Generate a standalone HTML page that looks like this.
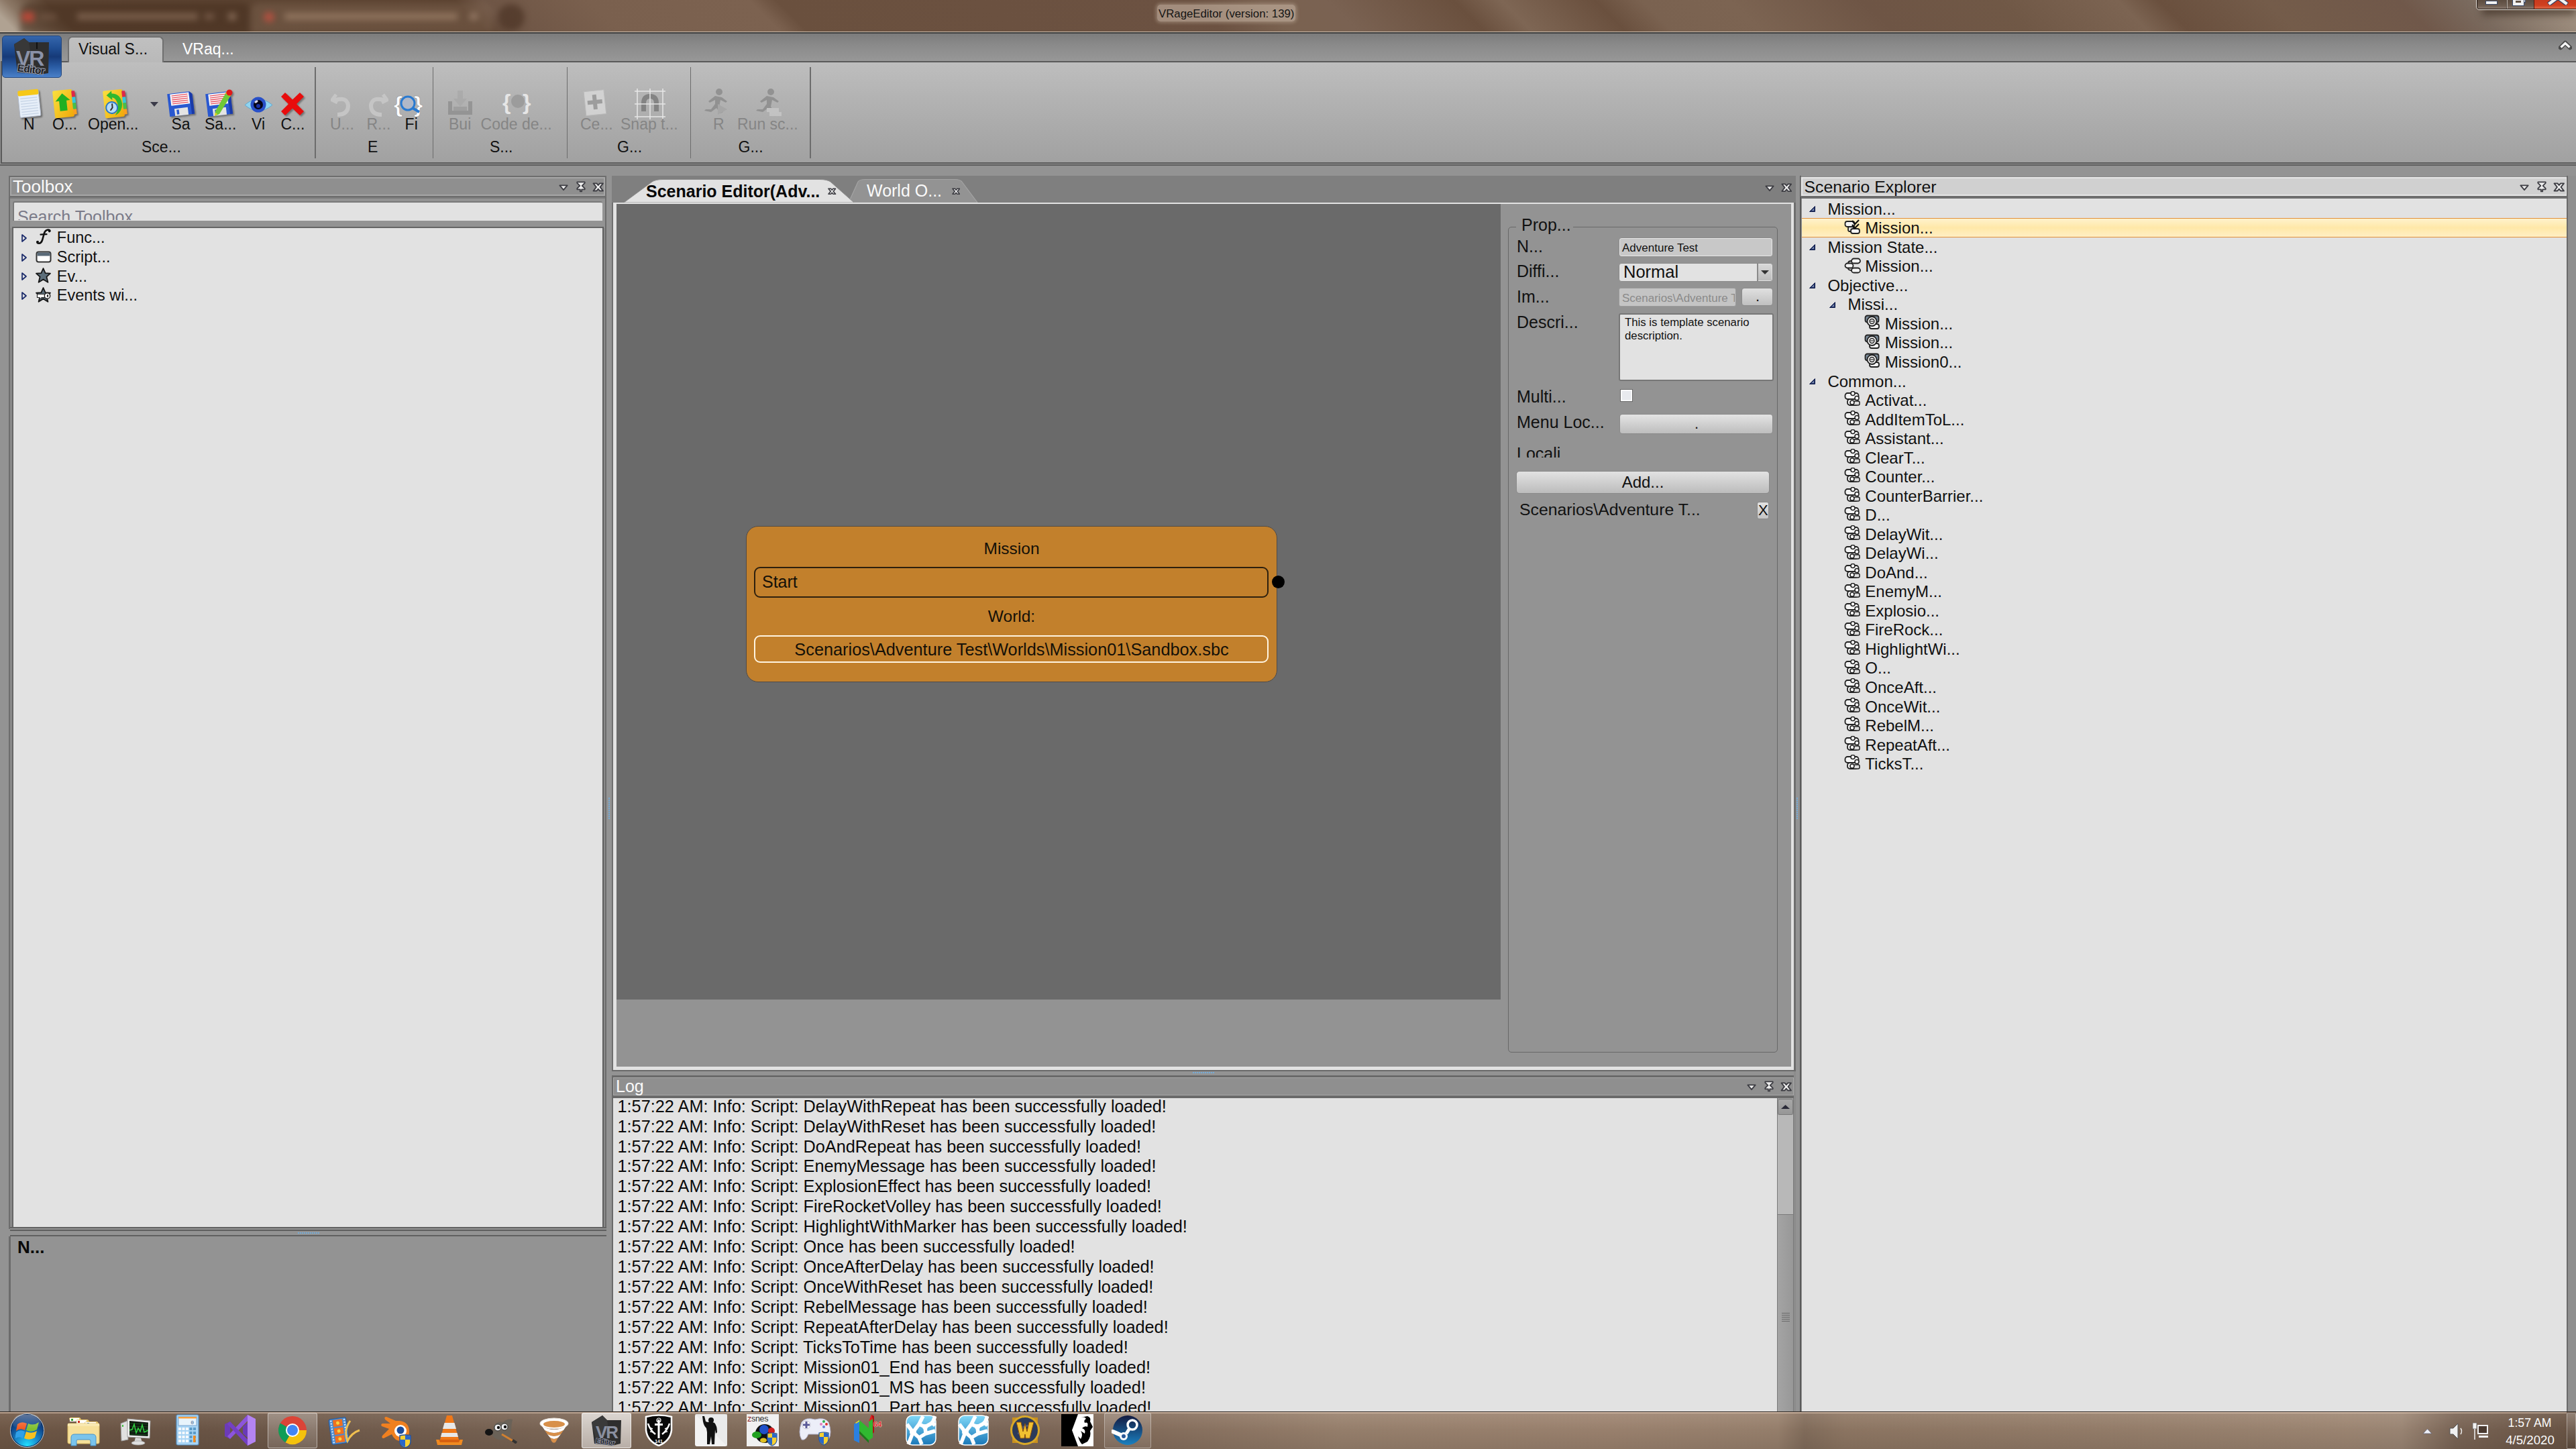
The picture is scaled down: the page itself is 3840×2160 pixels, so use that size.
<!DOCTYPE html>
<html><head><meta charset="utf-8">
<style>
*{margin:0;padding:0;box-sizing:border-box}
html,body{width:3840px;height:2160px;overflow:hidden;background:#939393;font-family:"Liberation Sans",sans-serif;position:relative}
.a{position:absolute}
.t{position:absolute;white-space:nowrap;line-height:1}
svg{position:absolute}
</style></head><body>
<div class="a" style="left:0px;top:0px;width:3840px;height:47px;background:linear-gradient(45deg,#b0a292 17px,#8c7866 38px,#5e4634 80px,#5a412f 512px,#6e5545 540px,#7a604e 653px,#7c6250 823px,#6a503e 851px,#6c5242 1289px,#7a6250 1360px,#7a6252 1431px,#6a503e 1565px,#7e6654 1615px,#6a503e 1714px,#7a6250 1763px,#7c6452 1855px,#6e5545 1996px,#705846 2138px,#7c6452 2265px,#6a503e 2308px,#745c4a 2421px,#70584a 2562px,#7a6a5e 2633px,#a09080 2732px)"></div>
<div class="a" style="left:0;top:0;width:1200px;height:47px;filter:blur(5px);overflow:visible"><div class="a" style="left:30px;top:4px;width:345px;height:46px;background:rgba(70,45,30,0.55);border-radius:16px 16px 0 0"></div><div class="a" style="left:372px;top:4px;width:362px;height:46px;background:rgba(135,110,90,0.35);border-radius:16px 16px 0 0"></div><div class="a" style="left:33px;top:18px;width:18px;height:14px;background:#b84838;border-radius:4px"></div><div class="a" style="left:60px;top:21px;width:24px;height:8px;background:rgba(130,100,80,0.5)"></div><div class="a" style="left:115px;top:19px;width:180px;height:11px;background:rgba(150,120,100,0.55)"></div><div class="a" style="left:305px;top:20px;width:14px;height:9px;background:rgba(150,120,100,0.5)"></div><div class="a" style="left:340px;top:19px;width:12px;height:11px;background:rgba(160,130,110,0.6)"></div><div class="a" style="left:393px;top:18px;width:16px;height:15px;background:#b05040;border-radius:8px"></div><div class="a" style="left:424px;top:19px;width:258px;height:11px;background:rgba(165,135,112,0.6)"></div><div class="a" style="left:700px;top:19px;width:12px;height:11px;background:rgba(170,140,120,0.6)"></div><div class="a" style="left:742px;top:6px;width:40px;height:40px;border-radius:20px;background:rgba(65,42,28,0.55)"></div></div>
<div class="t" style="left:1725px;top:7px;height:25px;padding:6px 2px 0 2px;font-size:16.8px;color:#141414;background:rgba(200,182,165,0.6);border-radius:5px;box-shadow:0 0 5px 2px rgba(200,182,165,0.45)">VRageEditor (version: 139)</div>
<div class="a" style="left:3700px;top:8px;width:140px;height:14px;filter:blur(6px);background:rgba(40,25,15,0.55)"></div>
<div class="a" style="left:3691px;top:-2px;width:152px;height:17px;border:1px solid #f0e8e0;border-radius:0 0 0 5px;overflow:hidden"><div class="a" style="left:0;top:0;width:150px;height:15px;border:1px solid #1e1612;border-top:none;border-radius:0 0 0 4px;overflow:hidden;background:linear-gradient(#5a4a3e,#6e5e52 70%,#8a7a70)"><div class="a" style="left:43px;top:0;width:2px;height:15px;background:linear-gradient(90deg,#2a2018,#e8e0d8)"></div><div class="a" style="left:84px;top:0;width:66px;height:15px;background:linear-gradient(#c83a1e,#d04020 60%,#e07050);border-left:1px solid #5a1a10"></div></div></div>
<div class="a" style="left:3705px;top:1px;width:18px;height:6px;background:#f2f2f2;border:1px solid #3a4a6a"></div>
<div class="a" style="left:3746px;top:-3px;width:16px;height:11px;border:4px solid #f2f2f2;box-shadow:0 0 0 1px #3a4a6a"></div>
<div class="a" style="left:3762px;top:-2px;width:3px;height:6px;background:#f2f2f2;border:1px solid #3a4a6a"></div>
<svg class="a" style="left:3796px;top:-8px;" width="34" height="16" viewBox="0 0 34 16"><path d="M3 14.5 L17 4 L31 14.5 M3 -6 L17 4 L31 -6" fill="none" stroke="#3a4060" stroke-width="7" stroke-linejoin="round"/><path d="M3.5 14 L17 4 L30.5 14 M3.5 -5.5 L17 4 L30.5 -5.5" fill="none" stroke="#f2f2f2" stroke-width="4.5"/></svg>
<div class="a" style="left:0px;top:47px;width:3840px;height:1px;background:#cdbdac"></div>
<div class="a" style="left:0px;top:48px;width:3840px;height:2px;background:#3e3e3e"></div>
<div class="a" style="left:0px;top:50px;width:3840px;height:42px;background:linear-gradient(#7c7c7c,#8a8a8a 40%,#989898)"></div>
<div class="a" style="left:1px;top:91px;width:3839px;height:153px;border:2px solid #5a5a5a;border-right:none;background:linear-gradient(#bebebe,#b3b3b3 35%,#a1a1a1)"></div>
<div class="a" style="left:0px;top:244px;width:3840px;height:1px;background:#9c9c9c"></div>
<div class="a" style="left:0px;top:245px;width:3840px;height:2px;background:#5c5c5c"></div>
<div class="a" style="left:101px;top:54px;width:143px;height:39px;border:2px solid #707070;border-bottom:none;border-radius:7px 7px 0 0;background:linear-gradient(#c0c0c0,#b9b9b9)"></div>
<div class="t" style="left:117px;top:62.0px;font-size:23px;color:#111;font-weight:normal;">Visual S...</div>
<div class="t" style="left:272px;top:62.0px;font-size:23px;color:#fff;font-weight:normal;">VRaq...</div>
<div class="a" style="left:3px;top:53px;width:89px;height:63px;border-radius:5px;border:1px solid #23477e;background:linear-gradient(#3566ac 0,#1f4d92 30%,#163a78 50%,#2a5ca4 75%,#4a80c8 100%)"></div>
<svg class="a" style="left:20px;top:56px;" width="56" height="58" viewBox="0 0 56 58"><path d="M1 10 L16 1 L23 7 L53 7 L52 53 L40 55 L6 52 Z" fill="#2e2e2e"/><path d="M1 10 L16 1 L23 7 L27 33 L8 40Z" fill="#383838"/><line x1="35" y1="7" x2="35" y2="17" stroke="#111" stroke-width="2"/><text x="4" y="42" font-family="Liberation Sans" font-weight="bold" font-size="32" fill="#8a92a8" letter-spacing="-2">VR</text><text x="6" y="53" font-family="Liberation Sans" font-weight="bold" font-size="15" fill="#1c1c1c" stroke="#9aa0b4" stroke-width="2" paint-order="stroke" transform="rotate(7 30 48)" letter-spacing="-0.5">Editor</text></svg>
<svg class="a" style="left:3814px;top:59px;" width="20" height="16" viewBox="0 0 20 16"><path d="M3 12 L10 5 L17 12" fill="none" stroke="#4a4a4a" stroke-width="6.5" stroke-linecap="round" stroke-linejoin="round"/><path d="M3.5 11.5 L10 5.5 L16.5 11.5" fill="none" stroke="#f6f6f6" stroke-width="3.2"/></svg>
<div class="a" style="left:469px;top:99.5px;width:1.8px;height:136.5px;background:#6c6c6c"></div>
<div class="a" style="left:644.5px;top:99.5px;width:1.8px;height:136.5px;background:#6c6c6c"></div>
<div class="a" style="left:844.5px;top:99.5px;width:1.8px;height:136.5px;background:#6c6c6c"></div>
<div class="a" style="left:1028.5px;top:99.5px;width:1.8px;height:136.5px;background:#6c6c6c"></div>
<div class="a" style="left:1207px;top:99.5px;width:1.8px;height:136.5px;background:#6c6c6c"></div>
<svg class="a" style="left:23px;top:130px;filter:drop-shadow(2px 2px 1.2px rgba(0,0,0,0.4))" width="42" height="48" viewBox="0 0 42 48"><defs><linearGradient id="yg" x1="0" y1="0" x2="1" y2="1"><stop offset="0" stop-color="#fae040"/><stop offset="1" stop-color="#f0a808"/></linearGradient></defs><g transform="rotate(-6 21 24)"><rect x="5" y="5" width="31" height="39" rx="2" fill="#e6eef8" stroke="#b0b8c8" stroke-width="1"/><rect x="5" y="4" width="31" height="8" rx="2" fill="#f6c818"/><line x1="8" y1="16" x2="33" y2="16" stroke="#c4d2e4" stroke-width="1.2"/><line x1="8" y1="20" x2="33" y2="20" stroke="#c4d2e4" stroke-width="1.2"/><line x1="8" y1="24" x2="33" y2="24" stroke="#c4d2e4" stroke-width="1.2"/><line x1="8" y1="28" x2="33" y2="28" stroke="#c4d2e4" stroke-width="1.2"/><line x1="8" y1="32" x2="33" y2="32" stroke="#c4d2e4" stroke-width="1.2"/><line x1="8" y1="36" x2="33" y2="36" stroke="#c4d2e4" stroke-width="1.2"/><line x1="8" y1="40" x2="33" y2="40" stroke="#c4d2e4" stroke-width="1.2"/></g></svg>
<div class="t" style="left:35px;top:174.0px;font-size:23px;color:#111;font-weight:normal;">N</div>
<svg class="a" style="left:75px;top:130px;filter:drop-shadow(2px 2px 1.2px rgba(0,0,0,0.4))" width="42" height="48" viewBox="0 0 42 48"><g transform="rotate(-6 21 24)"><rect x="5" y="4" width="29" height="41" rx="2" fill="url(#yg)"/><rect x="33" y="7" width="5" height="9" fill="#e02848"/><rect x="33" y="16" width="5" height="9" fill="#38c8d8"/><rect x="33" y="25" width="5" height="9" fill="#48c048"/><rect x="33" y="34" width="5" height="8" fill="#f8a020"/></g><g transform="rotate(-6 21 24)"><path d="M19 9 L30 20 L24.5 20 L24.5 35 L13.5 35 L13.5 20 L8 20Z" fill="#22b022"/></g></svg>
<div class="t" style="left:78px;top:174.0px;font-size:23px;color:#111;font-weight:normal;">O...</div>
<svg class="a" style="left:150px;top:130px;filter:drop-shadow(2px 2px 1.2px rgba(0,0,0,0.4))" width="42" height="48" viewBox="0 0 42 48"><g transform="rotate(-6 21 24)"><rect x="5" y="4" width="29" height="41" rx="2" fill="url(#yg)"/><rect x="33" y="7" width="5" height="9" fill="#e02848"/><rect x="33" y="16" width="5" height="9" fill="#38c8d8"/><rect x="33" y="25" width="5" height="9" fill="#48c048"/><rect x="33" y="34" width="5" height="8" fill="#f8a020"/></g><g transform="rotate(-6 21 24)"><path d="M10 11 L18 5 L18 9 Q31 10 32 26 Q31 38 20 42 Q27 33 25 24 Q23 16 18 15 L18 19Z" fill="#30b830"/><circle cx="16" cy="30" r="8.5" fill="#b8dcf8" stroke="#2878c8" stroke-width="2"/><path d="M17 24 L17 30 L13.5 34" stroke="#333" stroke-width="2" fill="none"/></g></svg>
<div class="t" style="left:131px;top:174.0px;font-size:23px;color:#111;font-weight:normal;">Open...</div>
<svg class="a" style="left:224px;top:152px;" width="12" height="8" viewBox="0 0 12 8"><path d="M0 0 L12 0 L6 7Z" fill="#3a3a48"/></svg>
<svg class="a" style="left:247.5px;top:133px;filter:drop-shadow(2px 2px 1px rgba(0,0,0,0.35))" width="43" height="43" viewBox="0 0 43 43"><g transform="rotate(-7 21 21)"><path d="M3 5 L36 5 L40 9 L40 39 L3 39Z" fill="#2a58d0"/><path d="M36 5 L40 9 L40 39 L36 39Z" fill="#1a3aa8"/><rect x="7" y="6" width="28" height="17" fill="#fafafa"/><line x1="9" y1="8.5" x2="33" y2="8.5" stroke="#e85060" stroke-width="1.3"/><line x1="9" y1="11.5" x2="33" y2="11.5" stroke="#e85060" stroke-width="1.3"/><line x1="9" y1="14.5" x2="33" y2="14.5" stroke="#e85060" stroke-width="1.3"/><line x1="9" y1="17.5" x2="33" y2="17.5" stroke="#e85060" stroke-width="1.3"/><line x1="9" y1="20.5" x2="33" y2="20.5" stroke="#e85060" stroke-width="1.3"/><rect x="11" y="28" width="20" height="11" fill="#e4e4e4"/><rect x="14" y="30" width="3.5" height="7" fill="#2a58d0"/></g></svg>
<div class="t" style="left:255.5px;top:174.0px;font-size:23px;color:#111;font-weight:normal;">Sa</div>
<svg class="a" style="left:305px;top:133px;filter:drop-shadow(2px 2px 1px rgba(0,0,0,0.35))" width="43" height="43" viewBox="0 0 43 43"><g transform="rotate(-7 21 21)"><path d="M3 5 L36 5 L40 9 L40 39 L3 39Z" fill="#2a58d0"/><path d="M36 5 L40 9 L40 39 L36 39Z" fill="#1a3aa8"/><rect x="7" y="6" width="28" height="17" fill="#fafafa"/><line x1="9" y1="8.5" x2="33" y2="8.5" stroke="#e85060" stroke-width="1.3"/><line x1="9" y1="11.5" x2="33" y2="11.5" stroke="#e85060" stroke-width="1.3"/><line x1="9" y1="14.5" x2="33" y2="14.5" stroke="#e85060" stroke-width="1.3"/><line x1="9" y1="17.5" x2="33" y2="17.5" stroke="#e85060" stroke-width="1.3"/><line x1="9" y1="20.5" x2="33" y2="20.5" stroke="#e85060" stroke-width="1.3"/><rect x="11" y="28" width="20" height="11" fill="#e4e4e4"/><rect x="14" y="30" width="3.5" height="7" fill="#2a58d0"/></g><path d="M33 3 L40 8 L22 37 L15 40 L16 33Z" fill="#70c838"/><path d="M33 3 L40 8 L38 11 L31 6Z" fill="#f0a020"/><circle cx="37" cy="5" r="4.5" fill="#e01818"/><path d="M15 40 L16 35 L19 37Z" fill="#f0d020"/></svg>
<div class="t" style="left:305px;top:174.0px;font-size:23px;color:#111;font-weight:normal;">Sa...</div>
<svg class="a" style="left:364px;top:144px;" width="43" height="25" viewBox="0 0 43 25"><path d="M1 12.5 Q21 -5 42 12.5 Q21 30 1 12.5Z" fill="#90d4f0" stroke="#60a8d0" stroke-width="1"/><circle cx="21" cy="12" r="11.5" fill="#2850c8"/><circle cx="21" cy="12" r="7" fill="#050518"/><circle cx="21" cy="14" r="3" fill="#1a30a0"/><ellipse cx="18" cy="7.5" rx="2.8" ry="1.8" fill="#d8d8e8" transform="rotate(-30 18 7.5)"/></svg>
<div class="t" style="left:375px;top:174.0px;font-size:23px;color:#111;font-weight:normal;">Vi</div>
<svg class="a" style="left:416px;top:136px;filter:drop-shadow(2px 2px 1px rgba(0,0,0,0.35))" width="40" height="40" viewBox="0 0 40 40"><path d="M3 8 L9 2 L20 12.5 L31 2 L37 8 L26 19 L37 30 L31 36 L20 25.5 L9 36 L3 30 L14 19Z" fill="#e80c0c"/></svg>
<div class="t" style="left:418.5px;top:174.0px;font-size:23px;color:#111;font-weight:normal;">C...</div>
<div class="t" style="left:211px;top:207.5px;font-size:23px;color:#111;font-weight:normal;">Sce...</div>
<svg class="a" style="left:493px;top:135px;opacity:0.9" width="34" height="42" viewBox="0 0 34 42"><path d="M8 6 L2 14 L10 18" fill="none" stroke="#c8c8c8" stroke-width="5"/><path d="M4 15 Q24 8 26 22 Q26 36 10 36" fill="none" stroke="#c8c8c8" stroke-width="6"/></svg>
<div class="t" style="left:492px;top:174.0px;font-size:23px;color:#858585;font-weight:normal;">U...</div>
<svg class="a" style="left:545px;top:135px;opacity:0.9" width="34" height="42" viewBox="0 0 34 42"><path d="M26 6 L32 14 L24 18" fill="none" stroke="#c8c8c8" stroke-width="5"/><path d="M30 15 Q10 8 8 22 Q8 36 24 36" fill="none" stroke="#c8c8c8" stroke-width="6"/></svg>
<div class="t" style="left:546.5px;top:174.0px;font-size:23px;color:#858585;font-weight:normal;">R...</div>
<svg class="a" style="left:587px;top:135px;" width="48" height="42" viewBox="0 0 48 42"><text x="0" y="32" font-family="Liberation Sans" font-weight="bold" font-size="34" fill="#fff" stroke="#888" stroke-width="0.5">{</text><text x="30" y="32" font-family="Liberation Sans" font-weight="bold" font-size="34" fill="#fff" stroke="#888" stroke-width="0.5">}</text><circle cx="21" cy="19" r="10" fill="#b0b8c8" stroke="#2a7ad0" stroke-width="3"/><line x1="28" y1="26" x2="38" y2="32" stroke="#2a7ad0" stroke-width="4"/></svg>
<div class="t" style="left:603.6px;top:174.0px;font-size:23px;color:#111;font-weight:normal;">Fi</div>
<div class="t" style="left:548px;top:207.5px;font-size:23px;color:#111;font-weight:normal;">E</div>
<svg class="a" style="left:664px;top:133px;opacity:0.75" width="44" height="44" viewBox="0 0 44 44"><path d="M4 18 L4 38 L40 38 L40 18 L34 18 L34 32 L10 32 L10 18Z" fill="#8c8c8c"/><path d="M18 2 L26 2 L26 14 L32 14 L22 26 L12 14 L18 14Z" fill="#a8a8a8"/><rect x="12" y="26" width="20" height="6" fill="#9a9a9a"/></svg>
<div class="t" style="left:669px;top:174.0px;font-size:23px;color:#858585;font-weight:normal;">Bui</div>
<svg class="a" style="left:749px;top:133px;" width="48" height="44" viewBox="0 0 48 44"><text x="0" y="30" font-family="Liberation Sans" font-weight="bold" font-size="32" fill="#e6e6e6">{</text><text x="30" y="30" font-family="Liberation Sans" font-weight="bold" font-size="32" fill="#e6e6e6">}</text><circle cx="23" cy="18" r="10" fill="#9c9c9c"/></svg>
<div class="t" style="left:716.6px;top:174.0px;font-size:23px;color:#858585;font-weight:normal;">Code de...</div>
<div class="t" style="left:730px;top:207.5px;font-size:23px;color:#111;font-weight:normal;">S...</div>
<svg class="a" style="left:868px;top:131px;opacity:0.85" width="40" height="46" viewBox="0 0 40 46"><g transform="rotate(-6 20 23)"><rect x="4" y="4" width="30" height="36" fill="#d8d8d8" stroke="#bcbcbc"/><path d="M16 10 L22 10 L22 18 L30 18 L30 24 L22 24 L22 32 L16 32 L16 24 L8 24 L8 18 L16 18Z" fill="#9a9a9a"/></g></svg>
<div class="t" style="left:865px;top:174.0px;font-size:23px;color:#858585;font-weight:normal;">Ce...</div>
<svg class="a" style="left:946px;top:132px;opacity:0.85" width="46" height="46" viewBox="0 0 46 46"><path d="M10 34 L10 22 Q10 8 23 8 Q36 8 36 22 L36 34 L29 34 L29 22 Q29 15 23 15 Q17 15 17 22 L17 34Z" fill="#7c7c7c"/><line x1="4" y1="0" x2="4" y2="46" stroke="#f0f0f0" stroke-width="1.5"/><line x1="23" y1="0" x2="23" y2="46" stroke="#f0f0f0" stroke-width="1.5"/><line x1="42" y1="0" x2="42" y2="46" stroke="#f0f0f0" stroke-width="1.5"/><line x1="0" y1="4" x2="46" y2="4" stroke="#f0f0f0" stroke-width="1.5"/><line x1="0" y1="23" x2="46" y2="23" stroke="#f0f0f0" stroke-width="1.5"/><line x1="0" y1="42" x2="46" y2="42" stroke="#f0f0f0" stroke-width="1.5"/></svg>
<div class="t" style="left:925px;top:174.0px;font-size:23px;color:#858585;font-weight:normal;">Snap t...</div>
<div class="t" style="left:920px;top:207.5px;font-size:23px;color:#111;font-weight:normal;">G...</div>
<svg class="a" style="left:1046px;top:131px;opacity:0.8" width="46" height="46" viewBox="0 0 46 46"><circle cx="26" cy="6" r="5" fill="#8a8a8a"/><path d="M20 12 L30 14 L38 20 L36 22 L28 18 L26 28 L32 36 L28 38 L22 30 L14 36 L4 34 L6 32 L14 32 L20 24 L20 18 L12 22 L10 20Z" fill="#8a8a8a"/><path d="M24 24 L38 32 L24 40Z" fill="#a4a4a4"/></svg>
<div class="t" style="left:1063px;top:174.0px;font-size:23px;color:#858585;font-weight:normal;">R</div>
<svg class="a" style="left:1123px;top:131px;opacity:0.8" width="46" height="46" viewBox="0 0 46 46"><circle cx="26" cy="6" r="5" fill="#8a8a8a"/><path d="M20 12 L30 14 L38 20 L36 22 L28 18 L26 28 L32 36 L28 38 L22 30 L14 36 L4 34 L6 32 L14 32 L20 24 L20 18 L12 22 L10 20Z" fill="#8a8a8a"/><rect x="20" y="30" width="18" height="6" fill="#c8c8c8"/><rect x="24" y="36" width="18" height="6" fill="#c8c8c8"/></svg>
<div class="t" style="left:1099px;top:174.0px;font-size:23px;color:#858585;font-weight:normal;">Run sc...</div>
<div class="t" style="left:1100.5px;top:207.5px;font-size:23px;color:#111;font-weight:normal;">G...</div>
<div class="a" style="left:13px;top:262px;width:891px;height:1570px;background:#8a8a8a;border:2px solid #6c6c6c"></div>
<div class="a" style="left:13px;top:262px;width:891px;height:32px;border:2px solid #6e6e6e;background:#8f8f8f;box-shadow:inset 0 0 0 2px #a6a6a6"></div>
<div class="t" style="left:19px;top:265.0px;font-size:26px;color:#fafafa;font-weight:normal;">Toolbox</div>
<svg class="a" style="left:882.5px;top:271.5px" width="17.5" height="14.5" viewBox="0 0 19 16"><path d="M1.5 1.5 L7 1.5 L9.5 4.6 L12 1.5 L17.5 1.5 L12.6 7.6 L17.5 13.8 L12 13.8 L9.5 10.6 L7 13.8 L1.5 13.8 L6.4 7.6Z" fill="#eeeeee" stroke="#3c3c42" stroke-width="2" stroke-linejoin="round"/></svg>
<svg class="a" style="left:859px;top:269.5px" width="14.5" height="17.3" viewBox="0 0 16 19"><path d="M1.5 1.5 L14 1.5 L14 3.2 L9.6 7.6 L14 12 L14 13.6 L9 13.6 L9 17 L6.5 17 L6.5 13.6 L1.5 13.6 L1.5 12 L5.9 7.6 L1.5 3.2Z" fill="#eeeeee" stroke="#3c3c42" stroke-width="2" stroke-linejoin="round"/></svg>
<svg class="a" style="left:833px;top:274.5px" width="14.5" height="10" viewBox="0 0 16 11"><path d="M1.5 1.5 L14 1.5 L7.75 9Z" fill="#eeeeee" stroke="#3c3c42" stroke-width="2" stroke-linejoin="round"/></svg>
<div class="a" style="left:15px;top:294px;width:887px;height:8px;background:#7a7a7a"></div>
<div class="a" style="left:15px;top:296px;width:887px;height:44px;background:#939393"></div>
<div class="a" style="left:19px;top:300px;width:879px;height:29px;background:#e2e2e2;border-top:2px solid #7a7a7a;border-left:2px solid #7a7a7a;border-radius:3px 3px 0 0;overflow:hidden"></div>
<div class="a" style="left:21px;top:302px;width:876px;height:26px;overflow:hidden"><div class="t" style="left:5px;top:9px;font-size:25px;color:#7a7a88">Search Toolbox</div></div>
<div class="a" style="left:18px;top:338px;width:882px;height:1493px;background:#e2e2e2;border:2px solid #666;border-right:none;border-bottom:none"></div>
<div class="a" style="left:898px;top:338px;width:2px;height:1493px;background:#5e5e5e"></div>
<div class="a" style="left:18px;top:1829px;width:882px;height:2px;background:#5e5e5e"></div>
<svg class="a" style="left:31px;top:348.2px;" width="10" height="14" viewBox="0 0 10 14"><path d="M2 2 L8 7 L2 12Z" fill="none" stroke="#1a2a6a" stroke-width="1.7" stroke-linejoin="round"/></svg>
<svg class="a" style="left:31px;top:376.8px;" width="10" height="14" viewBox="0 0 10 14"><path d="M2 2 L8 7 L2 12Z" fill="none" stroke="#1a2a6a" stroke-width="1.7" stroke-linejoin="round"/></svg>
<svg class="a" style="left:31px;top:405.4px;" width="10" height="14" viewBox="0 0 10 14"><path d="M2 2 L8 7 L2 12Z" fill="none" stroke="#1a2a6a" stroke-width="1.7" stroke-linejoin="round"/></svg>
<svg class="a" style="left:31px;top:434.0px;" width="10" height="14" viewBox="0 0 10 14"><path d="M2 2 L8 7 L2 12Z" fill="none" stroke="#1a2a6a" stroke-width="1.7" stroke-linejoin="round"/></svg>
<svg class="a" style="left:53px;top:341px;" width="24" height="24" viewBox="0 0 24 24"><path d="M21.5 3.2 Q21 1.2 17.5 1.8 Q14.2 2.6 12.8 7 L10.2 16.5 Q8.6 21.6 5 21.8 Q2.2 21.9 2.4 19.6" fill="none" stroke="#111" stroke-width="2.6" stroke-linecap="round"/><path d="M7.5 8.6 L16.5 8.2" stroke="#111" stroke-width="2.2" stroke-linecap="round"/><circle cx="20.6" cy="3.6" r="1.8" fill="#111"/><circle cx="3.2" cy="19.6" r="1.8" fill="#111"/></svg>
<svg class="a" style="left:53px;top:374px;" width="24" height="18" viewBox="0 0 24 18"><rect x="1.5" y="1.5" width="21" height="15" rx="3" fill="#fff" stroke="#333" stroke-width="2"/><rect x="2.5" y="2.5" width="19" height="5" fill="#5a6a78"/></svg>
<svg class="a" style="left:53px;top:399px;" width="23" height="23" viewBox="0 0 23 23"><path d="M11.5 1 L14.6 8.2 L22 8.6 L16.4 13.6 L18.4 21.8 L11.5 17.4 L4.6 21.8 L6.6 13.6 L1 8.6 L8.4 8.2Z" fill="#5c6e7a" stroke="#151515" stroke-width="1.8" stroke-linejoin="round"/></svg>
<svg class="a" style="left:53px;top:428px;" width="23" height="23" viewBox="0 0 23 23"><path d="M11.5 1 L14.6 8.2 L22 8.6 L16.4 13.6 L18.4 21.8 L11.5 17.4 L4.6 21.8 L6.6 13.6 L1 8.6 L8.4 8.2Z" fill="#5c6e7a" stroke="#151515" stroke-width="1.8" stroke-linejoin="round"/><path d="M2.5 10.5 L15 10.5 L15 15.5 L9 15.5 L9 17 L6 17 L6 15.5 L2.5 15.5Z" fill="#fff" stroke="#222" stroke-width="1.2"/><circle cx="17.5" cy="13" r="4.2" fill="#fff" stroke="#222" stroke-width="1.4"/><ellipse cx="18" cy="13" rx="1.2" ry="2" fill="#222"/></svg>
<div class="t" style="left:84.8px;top:343.3px;font-size:23.5px;color:#111;font-weight:normal;">Func...</div>
<div class="t" style="left:84.8px;top:371.9px;font-size:23.5px;color:#111;font-weight:normal;">Script...</div>
<div class="t" style="left:84.8px;top:400.5px;font-size:23.5px;color:#111;font-weight:normal;">Ev...</div>
<div class="t" style="left:84.8px;top:429.1px;font-size:23.5px;color:#111;font-weight:normal;">Events wi...</div>
<div class="a" style="left:15px;top:1829px;width:889px;height:14px;background:#939393;border-top:2px solid #626262;border-bottom:2px solid #606060"></div>
<div class="a" style="left:15px;top:1833px;width:889px;height:2px;background:#5e5e5e"></div>
<div class="a" style="left:13px;top:1843px;width:891px;height:261px;background:#939393;border-left:3px solid #6c6c6c"></div>
<div class="t" style="left:26px;top:1846.0px;font-size:26px;color:#0a0a0a;font-weight:bold;">N...</div>
<div class="a" style="left:904px;top:262px;width:8px;height:1842px;background:#939393"></div>
<div class="a" style="left:912px;top:262px;width:1765px;height:40px;background:#7f7f7f"></div>
<svg class="a" style="left:900px;top:260px" width="600" height="45" viewBox="900 260 600 45"><path d="M1265 302 L1279 271 Q1281 267.5 1290 267.5 L1424 267.5 Q1431 267.5 1434 271 L1457 302Z" fill="#939393" stroke="#a4a4a4" stroke-width="1.2"/><path d="M930 302 L972 271 Q977 267.5 988 267.5 L1222 267.5 Q1233 267.5 1238 271 L1273 302Z" fill="#e2e2e2" stroke="#8c8c8c" stroke-width="1"/></svg>
<div class="t" style="left:963px;top:273.3px;font-size:25px;color:#080808;font-weight:bold;">Scenario Editor(Adv...</div>
<svg class="a" style="left:1234px;top:279.5px" width="12.5" height="11" viewBox="0 0 19 16"><path d="M1.5 1.5 L7 1.5 L9.5 4.6 L12 1.5 L17.5 1.5 L12.6 7.6 L17.5 13.8 L12 13.8 L9.5 10.6 L7 13.8 L1.5 13.8 L6.4 7.6Z" fill="#eeeeee" stroke="#3c3c42" stroke-width="2.4" stroke-linejoin="round"/></svg>
<div class="t" style="left:1292px;top:272.1px;font-size:25px;color:#fafafa;font-weight:normal;">World O...</div>
<svg class="a" style="left:1418.5px;top:279.5px" width="12.5" height="11" viewBox="0 0 19 16"><path d="M1.5 1.5 L7 1.5 L9.5 4.6 L12 1.5 L17.5 1.5 L12.6 7.6 L17.5 13.8 L12 13.8 L9.5 10.6 L7 13.8 L1.5 13.8 L6.4 7.6Z" fill="#eeeeee" stroke="#3c3c42" stroke-width="2.4" stroke-linejoin="round"/></svg>
<svg class="a" style="left:2631px;top:275.5px" width="14.5" height="10" viewBox="0 0 16 11"><path d="M1.5 1.5 L14 1.5 L7.75 9Z" fill="#eeeeee" stroke="#3c3c42" stroke-width="2" stroke-linejoin="round"/></svg>
<svg class="a" style="left:2654.5px;top:273px" width="16.5" height="14" viewBox="0 0 19 16"><path d="M1.5 1.5 L7 1.5 L9.5 4.6 L12 1.5 L17.5 1.5 L12.6 7.6 L17.5 13.8 L12 13.8 L9.5 10.6 L7 13.8 L1.5 13.8 L6.4 7.6Z" fill="#eeeeee" stroke="#3c3c42" stroke-width="2" stroke-linejoin="round"/></svg>
<div class="a" style="left:912px;top:302px;width:1765px;height:1296px;background:#6e6e6e"></div>
<div class="a" style="left:914px;top:302px;width:1760px;height:1294px;background:#e2e2e2"></div>
<div class="a" style="left:919px;top:304px;width:1751px;height:1286px;background:#939393"></div>
<div class="a" style="left:919px;top:304px;width:1318px;height:1186px;background:#6a6a6a"></div>
<div class="a" style="left:1112px;top:783.5px;width:792px;height:233px;background:#c2802c;border:1.5px solid #4e4a48;border-radius:18px"></div>
<div class="t" style="left:1508px;top:806.3px;font-size:24.5px;color:#141008;font-weight:normal;transform:translateX(-50%);">Mission</div>
<div class="a" style="left:1124px;top:845px;width:767px;height:46px;border:2.5px solid #2e200e;border-radius:9px"></div>
<div class="t" style="left:1136px;top:854.8px;font-size:25px;color:#141008;font-weight:normal;">Start</div>
<div class="a" style="left:1896px;top:858px;width:19px;height:19px;border-radius:50%;background:#000"></div>
<div class="t" style="left:1508px;top:907.3px;font-size:24.5px;color:#141008;font-weight:normal;transform:translateX(-50%);">World:</div>
<div class="a" style="left:1124px;top:947px;width:767px;height:41px;border:2.5px solid #fff4e0;border-radius:9px"></div>
<div class="t" style="left:1508px;top:956.1px;font-size:25.3px;color:#141008;font-weight:normal;transform:translateX(-50%);">Scenarios\Adventure Test\Worlds\Mission01\Sandbox.sbc</div>
<div class="a" style="left:2237px;top:304px;width:433px;height:1286px;background:#939393"></div>
<div class="a" style="left:2248px;top:337.5px;width:401.5px;height:1231.5px;border:1.5px solid #686868;border-radius:5px"></div>
<div class="a" style="left:2260px;top:325px;width:85px;height:22px;background:#939393"></div>
<div class="t" style="left:2268px;top:323.3px;font-size:25px;color:#111;font-weight:normal;">Prop...</div>
<div class="t" style="left:2261px;top:354.8px;font-size:25px;color:#111;font-weight:normal;">N...</div>
<div class="a" style="left:2413px;top:354px;width:230px;height:29px;border:1.5px solid #8c8c8c;border-radius:4px;background:#c8c8c8;box-shadow:inset 0 0 0 1px #e8e8e8"></div>
<div class="t" style="left:2418px;top:360.6px;font-size:17px;color:#111;font-weight:normal;">Adventure Test</div>
<div class="t" style="left:2261px;top:392.3px;font-size:25px;color:#111;font-weight:normal;">Diffi...</div>
<div class="a" style="left:2413px;top:392px;width:230px;height:28px;border:1.5px solid #8a8a8a;border-radius:4px;background:#e2e2e2"></div>
<div class="a" style="left:2619px;top:393px;width:1.5px;height:26px;background:#8a8a8a"></div>
<div class="a" style="left:2621px;top:394px;width:20px;height:24px;background:linear-gradient(#d8d8d8,#bcbcbc)"></div>
<svg class="a" style="left:2624px;top:402px;" width="14" height="8" viewBox="0 0 14 8"><path d="M1 1 L13 1 L7 7Z" fill="#333"/></svg>
<div class="t" style="left:2420px;top:392.9px;font-size:25.5px;color:#111;font-weight:normal;">Normal</div>
<div class="t" style="left:2261px;top:429.8px;font-size:25px;color:#111;font-weight:normal;">Im...</div>
<div class="a" style="left:2413px;top:429px;width:175px;height:28px;border:1.5px solid #9a9a9a;border-radius:3px;background:#c4c4c4"></div>
<div class="a" style="left:2415px;top:431px;width:171px;height:24px;overflow:hidden"><div class="t" style="left:3px;top:4.5px;font-size:17px;color:#8a8a8a">Scenarios\Adventure Test</div></div>
<div class="a" style="left:2596px;top:429px;width:47px;height:27px;border:1.5px solid #8a8a8a;border-radius:4px;background:linear-gradient(#e0e0e0,#c0c0c0)"></div>
<div class="t" style="left:2617px;top:431.4px;font-size:22px;color:#111;font-weight:normal;">.</div>
<div class="t" style="left:2261px;top:467.8px;font-size:25px;color:#111;font-weight:normal;">Descri...</div>
<div class="a" style="left:2413px;top:467px;width:231px;height:101px;border:2px solid #777;border-radius:3px;background:#e2e2e2"></div>
<div class="t" style="left:2422px;top:473.3px;font-size:16.8px;color:#111;font-weight:normal;">This is template scenario</div>
<div class="t" style="left:2422px;top:492.8px;font-size:16.8px;color:#111;font-weight:normal;">description.</div>
<div class="t" style="left:2261px;top:578.8px;font-size:25px;color:#111;font-weight:normal;">Multi...</div>
<div class="a" style="left:2415px;top:580px;width:19px;height:19px;border:1.5px solid #6a6a6a;background:#e8eaee;box-shadow:inset 0 0 0 1.5px #fff"></div>
<div class="t" style="left:2261px;top:616.8px;font-size:25px;color:#111;font-weight:normal;">Menu Loc...</div>
<div class="a" style="left:2414px;top:617px;width:229px;height:30px;border:1.5px solid #8a8a8a;border-radius:4px;background:linear-gradient(#e4e4e4,#bdbdbd)"></div>
<div class="t" style="left:2526px;top:621.4px;font-size:22px;color:#111;font-weight:normal;">.</div>
<div class="a" style="left:2255px;top:655px;width:300px;height:27px;overflow:hidden"><div class="t" style="left:6px;top:8.5px;font-size:25px;color:#111">Locali</div></div>
<div class="a" style="left:2260px;top:702px;width:378px;height:34px;border:1.5px solid #8a8a8a;border-radius:5px;background:linear-gradient(#e2e2e2,#bcbcbc)"></div>
<div class="t" style="left:2449px;top:706.7px;font-size:24px;color:#111;font-weight:normal;transform:translateX(-50%);">Add...</div>
<div class="t" style="left:2265px;top:748.0px;font-size:24.8px;color:#111;font-weight:normal;">Scenarios\Adventure T...</div>
<div class="a" style="left:2619px;top:748px;width:18px;height:26px;border:1.5px solid #8a8a8a;border-radius:3px;background:linear-gradient(#e2e2e2,#c4c4c4)"></div>
<div class="t" style="left:2621px;top:750.4px;font-size:22px;color:#111;font-weight:normal;">X</div>
<div class="a" style="left:912px;top:1595px;width:1765px;height:2px;background:#6a6a6a"></div>
<div class="a" style="left:912px;top:1597px;width:1765px;height:6px;background:#939393"></div>
<div class="a" style="left:912px;top:1603px;width:1765px;height:501px;background:#6a6a6a"></div>
<div class="a" style="left:914px;top:1605.5px;width:1760px;height:27.5px;background:#8f8f8f;border:1.5px solid #a8a8a8"></div>
<div class="t" style="left:918px;top:1606.8px;font-size:25px;color:#fafafa;font-weight:normal;">Log</div>
<svg class="a" style="left:2653.5px;top:1612.5px" width="17.5" height="14.5" viewBox="0 0 19 16"><path d="M1.5 1.5 L7 1.5 L9.5 4.6 L12 1.5 L17.5 1.5 L12.6 7.6 L17.5 13.8 L12 13.8 L9.5 10.6 L7 13.8 L1.5 13.8 L6.4 7.6Z" fill="#eeeeee" stroke="#3c3c42" stroke-width="2" stroke-linejoin="round"/></svg>
<svg class="a" style="left:2630px;top:1610.5px" width="14.5" height="17.3" viewBox="0 0 16 19"><path d="M1.5 1.5 L14 1.5 L14 3.2 L9.6 7.6 L14 12 L14 13.6 L9 13.6 L9 17 L6.5 17 L6.5 13.6 L1.5 13.6 L1.5 12 L5.9 7.6 L1.5 3.2Z" fill="#eeeeee" stroke="#3c3c42" stroke-width="2" stroke-linejoin="round"/></svg>
<svg class="a" style="left:2604px;top:1615.5px" width="14.5" height="10" viewBox="0 0 16 11"><path d="M1.5 1.5 L14 1.5 L7.75 9Z" fill="#eeeeee" stroke="#3c3c42" stroke-width="2" stroke-linejoin="round"/></svg>
<div class="a" style="left:914px;top:1637px;width:1735px;height:467px;background:#e2e2e2"></div>
<div class="a" style="left:914px;top:1637px;width:1735px;height:467px;overflow:hidden">
<div class="t" style="left:6.5px;top:-0.4px;font-size:25.3px;color:#0a0a0a">1:57:22 AM: Info: Script: DelayWithRepeat has been successfully loaded!</div>
<div class="t" style="left:6.5px;top:29.5px;font-size:25.3px;color:#0a0a0a">1:57:22 AM: Info: Script: DelayWithReset has been successfully loaded!</div>
<div class="t" style="left:6.5px;top:59.5px;font-size:25.3px;color:#0a0a0a">1:57:22 AM: Info: Script: DoAndRepeat has been successfully loaded!</div>
<div class="t" style="left:6.5px;top:89.4px;font-size:25.3px;color:#0a0a0a">1:57:22 AM: Info: Script: EnemyMessage has been successfully loaded!</div>
<div class="t" style="left:6.5px;top:119.4px;font-size:25.3px;color:#0a0a0a">1:57:22 AM: Info: Script: ExplosionEffect has been successfully loaded!</div>
<div class="t" style="left:6.5px;top:149.3px;font-size:25.3px;color:#0a0a0a">1:57:22 AM: Info: Script: FireRocketVolley has been successfully loaded!</div>
<div class="t" style="left:6.5px;top:179.3px;font-size:25.3px;color:#0a0a0a">1:57:22 AM: Info: Script: HighlightWithMarker has been successfully loaded!</div>
<div class="t" style="left:6.5px;top:209.2px;font-size:25.3px;color:#0a0a0a">1:57:22 AM: Info: Script: Once has been successfully loaded!</div>
<div class="t" style="left:6.5px;top:239.2px;font-size:25.3px;color:#0a0a0a">1:57:22 AM: Info: Script: OnceAfterDelay has been successfully loaded!</div>
<div class="t" style="left:6.5px;top:269.1px;font-size:25.3px;color:#0a0a0a">1:57:22 AM: Info: Script: OnceWithReset has been successfully loaded!</div>
<div class="t" style="left:6.5px;top:299.1px;font-size:25.3px;color:#0a0a0a">1:57:22 AM: Info: Script: RebelMessage has been successfully loaded!</div>
<div class="t" style="left:6.5px;top:329.0px;font-size:25.3px;color:#0a0a0a">1:57:22 AM: Info: Script: RepeatAfterDelay has been successfully loaded!</div>
<div class="t" style="left:6.5px;top:359.0px;font-size:25.3px;color:#0a0a0a">1:57:22 AM: Info: Script: TicksToTime has been successfully loaded!</div>
<div class="t" style="left:6.5px;top:388.9px;font-size:25.3px;color:#0a0a0a">1:57:22 AM: Info: Script: Mission01_End has been successfully loaded!</div>
<div class="t" style="left:6.5px;top:418.9px;font-size:25.3px;color:#0a0a0a">1:57:22 AM: Info: Script: Mission01_MS has been successfully loaded!</div>
<div class="t" style="left:6.5px;top:448.8px;font-size:25.3px;color:#0a0a0a">1:57:22 AM: Info: Script: Mission01_Part has been successfully loaded!</div>
</div>
<div class="a" style="left:2649px;top:1637px;width:25px;height:467px;background:#a2a2a2;border-left:1.5px solid #7a7a7a;border-right:1.5px solid #7a7a7a"></div>
<div class="a" style="left:2650px;top:1662px;width:23px;height:149px;background:#b8b8b8"></div>
<div class="a" style="left:2650px;top:1638px;width:23px;height:24px;border:1.5px solid #7a7a7a;border-radius:3px;background:linear-gradient(#a8a8a8,#969696)"></div>
<svg class="a" style="left:2654px;top:1646px;" width="15" height="8" viewBox="0 0 15 8"><path d="M1 7 L7.5 1 L14 7Z" fill="#2a2a38"/></svg>
<div class="a" style="left:2650px;top:1810px;width:23px;height:294px;background:linear-gradient(90deg,#a4a4a4,#989898);border-top:1.5px solid #7a7a7a"></div>
<div class="a" style="left:2656px;top:1957px;width:12px;height:1px;background:#6a6a6a"></div>
<div class="a" style="left:2656px;top:1960px;width:12px;height:1px;background:#6a6a6a"></div>
<div class="a" style="left:2656px;top:1963px;width:12px;height:1px;background:#6a6a6a"></div>
<div class="a" style="left:2656px;top:1966px;width:12px;height:1px;background:#6a6a6a"></div>
<div class="a" style="left:2656px;top:1969px;width:12px;height:1px;background:#6a6a6a"></div>
<div class="a" style="left:2674px;top:1597px;width:3px;height:507px;background:#8c8c8c"></div>
<div class="a" style="left:2677px;top:262px;width:8px;height:1842px;background:#939393"></div>
<div class="a" style="left:2683px;top:262px;width:2px;height:1842px;background:#5a5a5a"></div>
<div class="a" style="left:2685px;top:262px;width:1155px;height:1842px;background:#939393"></div>
<div class="a" style="left:2685px;top:264px;width:1142px;height:28px;background:#d0d0d0;border:2px solid #e6e6e6;box-shadow:0 0 0 1px #8a8a8a"></div>
<div class="t" style="left:2689.5px;top:267.3px;font-size:24.8px;color:#111;font-weight:normal;">Scenario Explorer</div>
<svg class="a" style="left:3805.5px;top:271.5px" width="17.5" height="14.5" viewBox="0 0 19 16"><path d="M1.5 1.5 L7 1.5 L9.5 4.6 L12 1.5 L17.5 1.5 L12.6 7.6 L17.5 13.8 L12 13.8 L9.5 10.6 L7 13.8 L1.5 13.8 L6.4 7.6Z" fill="#eeeeee" stroke="#3c3c42" stroke-width="2" stroke-linejoin="round"/></svg>
<svg class="a" style="left:3782px;top:269.5px" width="14.5" height="17.3" viewBox="0 0 16 19"><path d="M1.5 1.5 L14 1.5 L14 3.2 L9.6 7.6 L14 12 L14 13.6 L9 13.6 L9 17 L6.5 17 L6.5 13.6 L1.5 13.6 L1.5 12 L5.9 7.6 L1.5 3.2Z" fill="#eeeeee" stroke="#3c3c42" stroke-width="2" stroke-linejoin="round"/></svg>
<svg class="a" style="left:3756px;top:274.5px" width="14.5" height="10" viewBox="0 0 16 11"><path d="M1.5 1.5 L14 1.5 L7.75 9Z" fill="#eeeeee" stroke="#3c3c42" stroke-width="2" stroke-linejoin="round"/></svg>
<div class="a" style="left:2685px;top:292px;width:1142px;height:4px;background:#6e6e6e"></div>
<div class="a" style="left:2686px;top:296px;width:1140px;height:1808px;background:#e2e2e2"></div>
<div class="a" style="left:3826px;top:262px;width:14px;height:1842px;background:#8f8f8f;border-left:2px solid #6a6a6a"></div>
<div class="a" style="left:2686px;top:325px;width:1140px;height:29px;background:linear-gradient(#fff2cc,#ffe8a8 50%,#ffefc4);border-top:1.5px solid #e0903a;border-bottom:1.5px solid #e0903a"></div>
<svg class="a" style="left:2696.0px;top:306.0px;" width="11" height="11" viewBox="0 0 11 11"><path d="M9.5 1.5 L9.5 9.5 L1.5 9.5Z" fill="#2a3a6a" stroke="#0e1a4a" stroke-width="1" stroke-linejoin="round"/><path d="M8 4.5 L8 8 L4.5 8Z" fill="#7a8ab0"/></svg>
<div class="t" style="left:2724.4px;top:299.7px;font-size:24px;color:#111;font-weight:normal;">Mission...</div>
<svg class="a" style="left:2749px;top:326.53px;" width="25" height="22" viewBox="0 0 25 22"><rect x="1.5" y="3" width="14" height="8" rx="3" fill="#f4f4f4" stroke="#222" stroke-width="1.8"/><rect x="6" y="11" width="8" height="7" rx="2" fill="#ddd" stroke="#222" stroke-width="1.8"/><rect x="10" y="14" width="13" height="7" rx="3" fill="#f4f4f4" stroke="#222" stroke-width="1.8"/><path d="M12 2 L16 7 L22 1 M12 8 L16 13 L22 7" stroke="#111" stroke-width="2.2" fill="none"/></svg>
<div class="t" style="left:2780.3px;top:328.2px;font-size:24px;color:#111;font-weight:normal;">Mission...</div>
<svg class="a" style="left:2696.0px;top:363.06px;" width="11" height="11" viewBox="0 0 11 11"><path d="M9.5 1.5 L9.5 9.5 L1.5 9.5Z" fill="#2a3a6a" stroke="#0e1a4a" stroke-width="1" stroke-linejoin="round"/><path d="M8 4.5 L8 8 L4.5 8Z" fill="#7a8ab0"/></svg>
<div class="t" style="left:2724.4px;top:356.7px;font-size:24px;color:#111;font-weight:normal;">Mission State...</div>
<svg class="a" style="left:2749px;top:383.59000000000003px;" width="25" height="24" viewBox="0 0 25 24"><rect x="11" y="1.5" width="13" height="7" rx="3.5" fill="#f4f4f4" stroke="#222" stroke-width="1.8"/><rect x="1.5" y="8.5" width="12" height="7" rx="3.5" fill="#f4f4f4" stroke="#222" stroke-width="1.8"/><rect x="11" y="15.5" width="13" height="7" rx="3.5" fill="#f4f4f4" stroke="#222" stroke-width="1.8"/><path d="M11 5 Q6 5 6 8.5 M6 15.5 Q6 19 11 19" stroke="#222" stroke-width="1.8" fill="none"/></svg>
<div class="t" style="left:2780.3px;top:385.3px;font-size:24px;color:#111;font-weight:normal;">Mission...</div>
<svg class="a" style="left:2696.0px;top:420.12px;" width="11" height="11" viewBox="0 0 11 11"><path d="M9.5 1.5 L9.5 9.5 L1.5 9.5Z" fill="#2a3a6a" stroke="#0e1a4a" stroke-width="1" stroke-linejoin="round"/><path d="M8 4.5 L8 8 L4.5 8Z" fill="#7a8ab0"/></svg>
<div class="t" style="left:2724.4px;top:413.8px;font-size:24px;color:#111;font-weight:normal;">Objective...</div>
<svg class="a" style="left:2725.5px;top:448.65px;" width="11" height="11" viewBox="0 0 11 11"><path d="M9.5 1.5 L9.5 9.5 L1.5 9.5Z" fill="#2a3a6a" stroke="#0e1a4a" stroke-width="1" stroke-linejoin="round"/><path d="M8 4.5 L8 8 L4.5 8Z" fill="#7a8ab0"/></svg>
<div class="t" style="left:2754.4px;top:442.3px;font-size:24px;color:#111;font-weight:normal;">Missi...</div>
<svg class="a" style="left:2779px;top:469.18px;" width="24" height="22" viewBox="0 0 24 22"><rect x="1.5" y="1.5" width="20" height="10" rx="3" fill="#7a8a98" stroke="#222" stroke-width="1.8"/><rect x="8" y="14" width="14" height="7" rx="3" fill="#f4f4f4" stroke="#222" stroke-width="1.8"/><circle cx="11.5" cy="10" r="7" fill="#f4f4f4" stroke="#222" stroke-width="1.8"/><circle cx="11.5" cy="10" r="3.5" fill="none" stroke="#222" stroke-width="1.4"/><line x1="9" y1="10" x2="14" y2="10" stroke="#222" stroke-width="1.2"/></svg>
<div class="t" style="left:2809.8px;top:470.9px;font-size:24px;color:#111;font-weight:normal;">Mission...</div>
<svg class="a" style="left:2779px;top:497.71000000000004px;" width="24" height="22" viewBox="0 0 24 22"><rect x="1.5" y="1.5" width="20" height="10" rx="3" fill="#7a8a98" stroke="#222" stroke-width="1.8"/><rect x="8" y="14" width="14" height="7" rx="3" fill="#f4f4f4" stroke="#222" stroke-width="1.8"/><circle cx="11.5" cy="10" r="7" fill="#f4f4f4" stroke="#222" stroke-width="1.8"/><circle cx="11.5" cy="10" r="3.5" fill="none" stroke="#222" stroke-width="1.4"/><line x1="9" y1="10" x2="14" y2="10" stroke="#222" stroke-width="1.2"/></svg>
<div class="t" style="left:2809.8px;top:499.4px;font-size:24px;color:#111;font-weight:normal;">Mission...</div>
<svg class="a" style="left:2779px;top:526.24px;" width="24" height="22" viewBox="0 0 24 22"><rect x="1.5" y="1.5" width="20" height="10" rx="3" fill="#7a8a98" stroke="#222" stroke-width="1.8"/><rect x="8" y="14" width="14" height="7" rx="3" fill="#f4f4f4" stroke="#222" stroke-width="1.8"/><circle cx="11.5" cy="10" r="7" fill="#f4f4f4" stroke="#222" stroke-width="1.8"/><circle cx="11.5" cy="10" r="3.5" fill="none" stroke="#222" stroke-width="1.4"/><line x1="9" y1="10" x2="14" y2="10" stroke="#222" stroke-width="1.2"/></svg>
<div class="t" style="left:2809.8px;top:527.9px;font-size:24px;color:#111;font-weight:normal;">Mission0...</div>
<svg class="a" style="left:2696.0px;top:562.77px;" width="11" height="11" viewBox="0 0 11 11"><path d="M9.5 1.5 L9.5 9.5 L1.5 9.5Z" fill="#2a3a6a" stroke="#0e1a4a" stroke-width="1" stroke-linejoin="round"/><path d="M8 4.5 L8 8 L4.5 8Z" fill="#7a8ab0"/></svg>
<div class="t" style="left:2724.4px;top:556.5px;font-size:24px;color:#111;font-weight:normal;">Common...</div>
<svg class="a" style="left:2749px;top:583.3px;" width="25" height="23" viewBox="0 0 25 23"><rect x="1.5" y="3" width="20" height="9" rx="3.5" fill="#f4f4f4" stroke="#222" stroke-width="1.8"/><rect x="5" y="12" width="16" height="9" rx="3.5" fill="#f4f4f4" stroke="#222" stroke-width="1.8"/><rect x="13" y="15" width="10" height="6" rx="2" fill="#ddd" stroke="#222" stroke-width="1.5"/><circle cx="13" cy="3.5" r="3" fill="#fff" stroke="#222" stroke-width="1.6"/><circle cx="19" cy="10.5" r="3" fill="#fff" stroke="#222" stroke-width="1.6"/><circle cx="12" cy="17" r="3" fill="#fff" stroke="#222" stroke-width="1.6"/></svg>
<div class="t" style="left:2780.3px;top:585.0px;font-size:24px;color:#111;font-weight:normal;">Activat...</div>
<svg class="a" style="left:2749px;top:611.83px;" width="25" height="23" viewBox="0 0 25 23"><rect x="1.5" y="3" width="20" height="9" rx="3.5" fill="#f4f4f4" stroke="#222" stroke-width="1.8"/><rect x="5" y="12" width="16" height="9" rx="3.5" fill="#f4f4f4" stroke="#222" stroke-width="1.8"/><rect x="13" y="15" width="10" height="6" rx="2" fill="#ddd" stroke="#222" stroke-width="1.5"/><circle cx="13" cy="3.5" r="3" fill="#fff" stroke="#222" stroke-width="1.6"/><circle cx="19" cy="10.5" r="3" fill="#fff" stroke="#222" stroke-width="1.6"/><circle cx="12" cy="17" r="3" fill="#fff" stroke="#222" stroke-width="1.6"/></svg>
<div class="t" style="left:2780.3px;top:613.5px;font-size:24px;color:#111;font-weight:normal;">AddItemToL...</div>
<svg class="a" style="left:2749px;top:640.36px;" width="25" height="23" viewBox="0 0 25 23"><rect x="1.5" y="3" width="20" height="9" rx="3.5" fill="#f4f4f4" stroke="#222" stroke-width="1.8"/><rect x="5" y="12" width="16" height="9" rx="3.5" fill="#f4f4f4" stroke="#222" stroke-width="1.8"/><rect x="13" y="15" width="10" height="6" rx="2" fill="#ddd" stroke="#222" stroke-width="1.5"/><circle cx="13" cy="3.5" r="3" fill="#fff" stroke="#222" stroke-width="1.6"/><circle cx="19" cy="10.5" r="3" fill="#fff" stroke="#222" stroke-width="1.6"/><circle cx="12" cy="17" r="3" fill="#fff" stroke="#222" stroke-width="1.6"/></svg>
<div class="t" style="left:2780.3px;top:642.0px;font-size:24px;color:#111;font-weight:normal;">Assistant...</div>
<svg class="a" style="left:2749px;top:668.89px;" width="25" height="23" viewBox="0 0 25 23"><rect x="1.5" y="3" width="20" height="9" rx="3.5" fill="#f4f4f4" stroke="#222" stroke-width="1.8"/><rect x="5" y="12" width="16" height="9" rx="3.5" fill="#f4f4f4" stroke="#222" stroke-width="1.8"/><rect x="13" y="15" width="10" height="6" rx="2" fill="#ddd" stroke="#222" stroke-width="1.5"/><circle cx="13" cy="3.5" r="3" fill="#fff" stroke="#222" stroke-width="1.6"/><circle cx="19" cy="10.5" r="3" fill="#fff" stroke="#222" stroke-width="1.6"/><circle cx="12" cy="17" r="3" fill="#fff" stroke="#222" stroke-width="1.6"/></svg>
<div class="t" style="left:2780.3px;top:670.6px;font-size:24px;color:#111;font-weight:normal;">ClearT...</div>
<svg class="a" style="left:2749px;top:697.4200000000001px;" width="25" height="23" viewBox="0 0 25 23"><rect x="1.5" y="3" width="20" height="9" rx="3.5" fill="#f4f4f4" stroke="#222" stroke-width="1.8"/><rect x="5" y="12" width="16" height="9" rx="3.5" fill="#f4f4f4" stroke="#222" stroke-width="1.8"/><rect x="13" y="15" width="10" height="6" rx="2" fill="#ddd" stroke="#222" stroke-width="1.5"/><circle cx="13" cy="3.5" r="3" fill="#fff" stroke="#222" stroke-width="1.6"/><circle cx="19" cy="10.5" r="3" fill="#fff" stroke="#222" stroke-width="1.6"/><circle cx="12" cy="17" r="3" fill="#fff" stroke="#222" stroke-width="1.6"/></svg>
<div class="t" style="left:2780.3px;top:699.1px;font-size:24px;color:#111;font-weight:normal;">Counter...</div>
<svg class="a" style="left:2749px;top:725.95px;" width="25" height="23" viewBox="0 0 25 23"><rect x="1.5" y="3" width="20" height="9" rx="3.5" fill="#f4f4f4" stroke="#222" stroke-width="1.8"/><rect x="5" y="12" width="16" height="9" rx="3.5" fill="#f4f4f4" stroke="#222" stroke-width="1.8"/><rect x="13" y="15" width="10" height="6" rx="2" fill="#ddd" stroke="#222" stroke-width="1.5"/><circle cx="13" cy="3.5" r="3" fill="#fff" stroke="#222" stroke-width="1.6"/><circle cx="19" cy="10.5" r="3" fill="#fff" stroke="#222" stroke-width="1.6"/><circle cx="12" cy="17" r="3" fill="#fff" stroke="#222" stroke-width="1.6"/></svg>
<div class="t" style="left:2780.3px;top:727.6px;font-size:24px;color:#111;font-weight:normal;">CounterBarrier...</div>
<svg class="a" style="left:2749px;top:754.48px;" width="25" height="23" viewBox="0 0 25 23"><rect x="1.5" y="3" width="20" height="9" rx="3.5" fill="#f4f4f4" stroke="#222" stroke-width="1.8"/><rect x="5" y="12" width="16" height="9" rx="3.5" fill="#f4f4f4" stroke="#222" stroke-width="1.8"/><rect x="13" y="15" width="10" height="6" rx="2" fill="#ddd" stroke="#222" stroke-width="1.5"/><circle cx="13" cy="3.5" r="3" fill="#fff" stroke="#222" stroke-width="1.6"/><circle cx="19" cy="10.5" r="3" fill="#fff" stroke="#222" stroke-width="1.6"/><circle cx="12" cy="17" r="3" fill="#fff" stroke="#222" stroke-width="1.6"/></svg>
<div class="t" style="left:2780.3px;top:756.2px;font-size:24px;color:#111;font-weight:normal;">D...</div>
<svg class="a" style="left:2749px;top:783.01px;" width="25" height="23" viewBox="0 0 25 23"><rect x="1.5" y="3" width="20" height="9" rx="3.5" fill="#f4f4f4" stroke="#222" stroke-width="1.8"/><rect x="5" y="12" width="16" height="9" rx="3.5" fill="#f4f4f4" stroke="#222" stroke-width="1.8"/><rect x="13" y="15" width="10" height="6" rx="2" fill="#ddd" stroke="#222" stroke-width="1.5"/><circle cx="13" cy="3.5" r="3" fill="#fff" stroke="#222" stroke-width="1.6"/><circle cx="19" cy="10.5" r="3" fill="#fff" stroke="#222" stroke-width="1.6"/><circle cx="12" cy="17" r="3" fill="#fff" stroke="#222" stroke-width="1.6"/></svg>
<div class="t" style="left:2780.3px;top:784.7px;font-size:24px;color:#111;font-weight:normal;">DelayWit...</div>
<svg class="a" style="left:2749px;top:811.54px;" width="25" height="23" viewBox="0 0 25 23"><rect x="1.5" y="3" width="20" height="9" rx="3.5" fill="#f4f4f4" stroke="#222" stroke-width="1.8"/><rect x="5" y="12" width="16" height="9" rx="3.5" fill="#f4f4f4" stroke="#222" stroke-width="1.8"/><rect x="13" y="15" width="10" height="6" rx="2" fill="#ddd" stroke="#222" stroke-width="1.5"/><circle cx="13" cy="3.5" r="3" fill="#fff" stroke="#222" stroke-width="1.6"/><circle cx="19" cy="10.5" r="3" fill="#fff" stroke="#222" stroke-width="1.6"/><circle cx="12" cy="17" r="3" fill="#fff" stroke="#222" stroke-width="1.6"/></svg>
<div class="t" style="left:2780.3px;top:813.2px;font-size:24px;color:#111;font-weight:normal;">DelayWi...</div>
<svg class="a" style="left:2749px;top:840.07px;" width="25" height="23" viewBox="0 0 25 23"><rect x="1.5" y="3" width="20" height="9" rx="3.5" fill="#f4f4f4" stroke="#222" stroke-width="1.8"/><rect x="5" y="12" width="16" height="9" rx="3.5" fill="#f4f4f4" stroke="#222" stroke-width="1.8"/><rect x="13" y="15" width="10" height="6" rx="2" fill="#ddd" stroke="#222" stroke-width="1.5"/><circle cx="13" cy="3.5" r="3" fill="#fff" stroke="#222" stroke-width="1.6"/><circle cx="19" cy="10.5" r="3" fill="#fff" stroke="#222" stroke-width="1.6"/><circle cx="12" cy="17" r="3" fill="#fff" stroke="#222" stroke-width="1.6"/></svg>
<div class="t" style="left:2780.3px;top:841.8px;font-size:24px;color:#111;font-weight:normal;">DoAnd...</div>
<svg class="a" style="left:2749px;top:868.6px;" width="25" height="23" viewBox="0 0 25 23"><rect x="1.5" y="3" width="20" height="9" rx="3.5" fill="#f4f4f4" stroke="#222" stroke-width="1.8"/><rect x="5" y="12" width="16" height="9" rx="3.5" fill="#f4f4f4" stroke="#222" stroke-width="1.8"/><rect x="13" y="15" width="10" height="6" rx="2" fill="#ddd" stroke="#222" stroke-width="1.5"/><circle cx="13" cy="3.5" r="3" fill="#fff" stroke="#222" stroke-width="1.6"/><circle cx="19" cy="10.5" r="3" fill="#fff" stroke="#222" stroke-width="1.6"/><circle cx="12" cy="17" r="3" fill="#fff" stroke="#222" stroke-width="1.6"/></svg>
<div class="t" style="left:2780.3px;top:870.3px;font-size:24px;color:#111;font-weight:normal;">EnemyM...</div>
<svg class="a" style="left:2749px;top:897.13px;" width="25" height="23" viewBox="0 0 25 23"><rect x="1.5" y="3" width="20" height="9" rx="3.5" fill="#f4f4f4" stroke="#222" stroke-width="1.8"/><rect x="5" y="12" width="16" height="9" rx="3.5" fill="#f4f4f4" stroke="#222" stroke-width="1.8"/><rect x="13" y="15" width="10" height="6" rx="2" fill="#ddd" stroke="#222" stroke-width="1.5"/><circle cx="13" cy="3.5" r="3" fill="#fff" stroke="#222" stroke-width="1.6"/><circle cx="19" cy="10.5" r="3" fill="#fff" stroke="#222" stroke-width="1.6"/><circle cx="12" cy="17" r="3" fill="#fff" stroke="#222" stroke-width="1.6"/></svg>
<div class="t" style="left:2780.3px;top:898.8px;font-size:24px;color:#111;font-weight:normal;">Explosio...</div>
<svg class="a" style="left:2749px;top:925.6600000000001px;" width="25" height="23" viewBox="0 0 25 23"><rect x="1.5" y="3" width="20" height="9" rx="3.5" fill="#f4f4f4" stroke="#222" stroke-width="1.8"/><rect x="5" y="12" width="16" height="9" rx="3.5" fill="#f4f4f4" stroke="#222" stroke-width="1.8"/><rect x="13" y="15" width="10" height="6" rx="2" fill="#ddd" stroke="#222" stroke-width="1.5"/><circle cx="13" cy="3.5" r="3" fill="#fff" stroke="#222" stroke-width="1.6"/><circle cx="19" cy="10.5" r="3" fill="#fff" stroke="#222" stroke-width="1.6"/><circle cx="12" cy="17" r="3" fill="#fff" stroke="#222" stroke-width="1.6"/></svg>
<div class="t" style="left:2780.3px;top:927.3px;font-size:24px;color:#111;font-weight:normal;">FireRock...</div>
<svg class="a" style="left:2749px;top:954.19px;" width="25" height="23" viewBox="0 0 25 23"><rect x="1.5" y="3" width="20" height="9" rx="3.5" fill="#f4f4f4" stroke="#222" stroke-width="1.8"/><rect x="5" y="12" width="16" height="9" rx="3.5" fill="#f4f4f4" stroke="#222" stroke-width="1.8"/><rect x="13" y="15" width="10" height="6" rx="2" fill="#ddd" stroke="#222" stroke-width="1.5"/><circle cx="13" cy="3.5" r="3" fill="#fff" stroke="#222" stroke-width="1.6"/><circle cx="19" cy="10.5" r="3" fill="#fff" stroke="#222" stroke-width="1.6"/><circle cx="12" cy="17" r="3" fill="#fff" stroke="#222" stroke-width="1.6"/></svg>
<div class="t" style="left:2780.3px;top:955.9px;font-size:24px;color:#111;font-weight:normal;">HighlightWi...</div>
<svg class="a" style="left:2749px;top:982.72px;" width="25" height="23" viewBox="0 0 25 23"><rect x="1.5" y="3" width="20" height="9" rx="3.5" fill="#f4f4f4" stroke="#222" stroke-width="1.8"/><rect x="5" y="12" width="16" height="9" rx="3.5" fill="#f4f4f4" stroke="#222" stroke-width="1.8"/><rect x="13" y="15" width="10" height="6" rx="2" fill="#ddd" stroke="#222" stroke-width="1.5"/><circle cx="13" cy="3.5" r="3" fill="#fff" stroke="#222" stroke-width="1.6"/><circle cx="19" cy="10.5" r="3" fill="#fff" stroke="#222" stroke-width="1.6"/><circle cx="12" cy="17" r="3" fill="#fff" stroke="#222" stroke-width="1.6"/></svg>
<div class="t" style="left:2780.3px;top:984.4px;font-size:24px;color:#111;font-weight:normal;">O...</div>
<svg class="a" style="left:2749px;top:1011.25px;" width="25" height="23" viewBox="0 0 25 23"><rect x="1.5" y="3" width="20" height="9" rx="3.5" fill="#f4f4f4" stroke="#222" stroke-width="1.8"/><rect x="5" y="12" width="16" height="9" rx="3.5" fill="#f4f4f4" stroke="#222" stroke-width="1.8"/><rect x="13" y="15" width="10" height="6" rx="2" fill="#ddd" stroke="#222" stroke-width="1.5"/><circle cx="13" cy="3.5" r="3" fill="#fff" stroke="#222" stroke-width="1.6"/><circle cx="19" cy="10.5" r="3" fill="#fff" stroke="#222" stroke-width="1.6"/><circle cx="12" cy="17" r="3" fill="#fff" stroke="#222" stroke-width="1.6"/></svg>
<div class="t" style="left:2780.3px;top:1012.9px;font-size:24px;color:#111;font-weight:normal;">OnceAft...</div>
<svg class="a" style="left:2749px;top:1039.78px;" width="25" height="23" viewBox="0 0 25 23"><rect x="1.5" y="3" width="20" height="9" rx="3.5" fill="#f4f4f4" stroke="#222" stroke-width="1.8"/><rect x="5" y="12" width="16" height="9" rx="3.5" fill="#f4f4f4" stroke="#222" stroke-width="1.8"/><rect x="13" y="15" width="10" height="6" rx="2" fill="#ddd" stroke="#222" stroke-width="1.5"/><circle cx="13" cy="3.5" r="3" fill="#fff" stroke="#222" stroke-width="1.6"/><circle cx="19" cy="10.5" r="3" fill="#fff" stroke="#222" stroke-width="1.6"/><circle cx="12" cy="17" r="3" fill="#fff" stroke="#222" stroke-width="1.6"/></svg>
<div class="t" style="left:2780.3px;top:1041.5px;font-size:24px;color:#111;font-weight:normal;">OnceWit...</div>
<svg class="a" style="left:2749px;top:1068.31px;" width="25" height="23" viewBox="0 0 25 23"><rect x="1.5" y="3" width="20" height="9" rx="3.5" fill="#f4f4f4" stroke="#222" stroke-width="1.8"/><rect x="5" y="12" width="16" height="9" rx="3.5" fill="#f4f4f4" stroke="#222" stroke-width="1.8"/><rect x="13" y="15" width="10" height="6" rx="2" fill="#ddd" stroke="#222" stroke-width="1.5"/><circle cx="13" cy="3.5" r="3" fill="#fff" stroke="#222" stroke-width="1.6"/><circle cx="19" cy="10.5" r="3" fill="#fff" stroke="#222" stroke-width="1.6"/><circle cx="12" cy="17" r="3" fill="#fff" stroke="#222" stroke-width="1.6"/></svg>
<div class="t" style="left:2780.3px;top:1070.0px;font-size:24px;color:#111;font-weight:normal;">RebelM...</div>
<svg class="a" style="left:2749px;top:1096.8400000000001px;" width="25" height="23" viewBox="0 0 25 23"><rect x="1.5" y="3" width="20" height="9" rx="3.5" fill="#f4f4f4" stroke="#222" stroke-width="1.8"/><rect x="5" y="12" width="16" height="9" rx="3.5" fill="#f4f4f4" stroke="#222" stroke-width="1.8"/><rect x="13" y="15" width="10" height="6" rx="2" fill="#ddd" stroke="#222" stroke-width="1.5"/><circle cx="13" cy="3.5" r="3" fill="#fff" stroke="#222" stroke-width="1.6"/><circle cx="19" cy="10.5" r="3" fill="#fff" stroke="#222" stroke-width="1.6"/><circle cx="12" cy="17" r="3" fill="#fff" stroke="#222" stroke-width="1.6"/></svg>
<div class="t" style="left:2780.3px;top:1098.5px;font-size:24px;color:#111;font-weight:normal;">RepeatAft...</div>
<svg class="a" style="left:2749px;top:1125.37px;" width="25" height="23" viewBox="0 0 25 23"><rect x="1.5" y="3" width="20" height="9" rx="3.5" fill="#f4f4f4" stroke="#222" stroke-width="1.8"/><rect x="5" y="12" width="16" height="9" rx="3.5" fill="#f4f4f4" stroke="#222" stroke-width="1.8"/><rect x="13" y="15" width="10" height="6" rx="2" fill="#ddd" stroke="#222" stroke-width="1.5"/><circle cx="13" cy="3.5" r="3" fill="#fff" stroke="#222" stroke-width="1.6"/><circle cx="19" cy="10.5" r="3" fill="#fff" stroke="#222" stroke-width="1.6"/><circle cx="12" cy="17" r="3" fill="#fff" stroke="#222" stroke-width="1.6"/></svg>
<div class="t" style="left:2780.3px;top:1127.1px;font-size:24px;color:#111;font-weight:normal;">TicksT...</div>
<div class="a" style="left:0px;top:2104px;width:3840px;height:56px;background:linear-gradient(90deg,#725a48 0,#6e5848 300px,#7a6454 700px,#86705e 1100px,#7e6858 1500px,#8a7260 1730px,#9c8470 2000px,#a08672 2400px,#9c8470 2650px,#86705e 2690px,#927a66 2750px,#98806c 3100px,#a28a76 3500px,#a08a78 3580px,#7e6858 3660px,#6c5646 3840px)"></div>
<div class="a" style="left:0px;top:2104px;width:3840px;height:56px;background:linear-gradient(rgba(255,255,255,0.08),rgba(0,0,0,0.05) 50%,rgba(0,0,0,0.12))"></div>
<div class="a" style="left:0px;top:2103.5px;width:3840px;height:1.5px;background:#2e2620"></div>
<div class="a" style="left:0px;top:2105px;width:3826px;height:1.5px;background:rgba(235,210,190,0.55)"></div>
<div class="a" style="left:14.5px;top:2107px;width:51px;height:51px;border-radius:50%;background:radial-gradient(circle at 50% 95%,#20e0ff 0,#1a90d0 30%,#0e4a90 60%,#0a2e68 85%);border:1.5px solid #b8c8d8;box-shadow:inset 0 0 0 1px #0a2a58"></div>
<svg class="a" style="left:23px;top:2114px;" width="36" height="34" viewBox="0 0 36 34"><path d="M3 9 Q9 4 17 8 L14 18 Q7 14 1 19Z" fill="#f05a20"/><path d="M19 8 Q27 12 35 6 L32 17 Q24 22 16 18Z" fill="#80c030"/><path d="M1 21 Q7 16 14 20 L11 30 Q5 26 -1 31Z" fill="#30a0e8"/><path d="M16 20 Q24 24 32 19 L29 29 Q21 34 13 30Z" fill="#f8c020"/></svg>
<div class="a" style="left:19px;top:2109px;width:42px;height:20px;border-radius:21px 21px 12px 12px;background:linear-gradient(rgba(255,255,255,0.35),rgba(255,255,255,0.02))"></div>
<div class="a" style="left:399px;top:2106px;width:74px;height:53px;border:1px solid rgba(255,255,255,0.45);border-radius:3px;background:linear-gradient(rgba(255,255,255,0.28),rgba(255,255,255,0.12))"></div>
<div class="a" style="left:867px;top:2106px;width:74px;height:53px;border:1px solid rgba(255,255,255,0.6);border-radius:3px;background:linear-gradient(rgba(255,255,255,0.7),rgba(255,255,255,0.5))"></div>
<div class="a" style="left:1646px;top:2106px;width:70px;height:53px;border:1px solid rgba(255,255,255,0.35);border-radius:3px;background:linear-gradient(rgba(255,255,255,0.18),rgba(255,255,255,0.06))"></div>
<svg class="a" style="left:100px;top:2108px;" width="50" height="50" viewBox="0 0 50 50"><path d="M3 8 Q3 5 6 5 L18 5 Q20 5 21 8 L3 8Z" fill="#e8c870"/><rect x="4" y="6" width="14" height="5" fill="#fff"/><rect x="6" y="7" width="3" height="3" fill="#30a030"/><path d="M13 11 Q13 8 16 8 L30 8 Q32 8 33 11Z" fill="#e8c870"/><rect x="14" y="9" width="15" height="5" fill="#fff"/><rect x="16" y="10" width="3" height="3" fill="#d03020"/><path d="M26 14 Q26 11 29 11 L44 11 Q46 11 47 14Z" fill="#e8c870"/><rect x="27" y="12" width="16" height="5" fill="#fff"/><rect x="30" y="13" width="3" height="3" fill="#2080d0"/><rect x="1" y="14" width="47" height="30" rx="2" fill="#f6e09a" stroke="#d8b860" stroke-width="1"/><path d="M1 14 L48 14 L48 18 L1 18Z" fill="#f8e8b0"/><path d="M6 47 L6 35 Q6 30 11 30 L38 30 Q43 30 43 35 L43 47 L35 47 L35 40 Q35 38 33 38 L16 38 Q14 38 14 40 L14 47Z" fill="#7ac4ec" stroke="#4a94c8" stroke-width="1"/></svg>
<svg class="a" style="left:178px;top:2110px;" width="50" height="46" viewBox="0 0 50 46"><path d="M2 12 L12 8 L13 36 L3 38Z" fill="#e0e0e0" stroke="#9a9a9a" stroke-width="1"/><rect x="4" y="14" width="2" height="3" fill="#40c040"/><path d="M12 5 L46 8 L45 34 L12 32Z" fill="#f0f0f0" stroke="#a0a0a0" stroke-width="1"/><path d="M15 8 L43 10.5 L42.5 31 L15 29.5Z" fill="#101810"/><line x1="15" y1="12" x2="43" y2="13" stroke="#1a5a20" stroke-width="0.8"/><line x1="15" y1="16" x2="43" y2="17" stroke="#1a5a20" stroke-width="0.8"/><line x1="15" y1="20" x2="43" y2="21" stroke="#1a5a20" stroke-width="0.8"/><line x1="15" y1="24" x2="43" y2="25" stroke="#1a5a20" stroke-width="0.8"/><line x1="15" y1="28" x2="43" y2="29" stroke="#1a5a20" stroke-width="0.8"/><path d="M15 22 L19 21 L22 13 L25 26 L28 19 L31 24 L34 14 L37 25 L43 22" stroke="#30d040" stroke-width="1.5" fill="none"/><path d="M24 33 L32 34 L34 40 L22 40Z" fill="#d8d8d8"/><ellipse cx="28" cy="41" rx="10" ry="3" fill="#e0e0e0" stroke="#a8a8a8" stroke-width="0.8"/></svg>
<svg class="a" style="left:262px;top:2108px;" width="36" height="48" viewBox="0 0 36 48"><rect x="1" y="1" width="33" height="45" rx="2" fill="#a8d4f4" stroke="#5a90c0" stroke-width="1.2"/><rect x="4" y="4" width="27" height="13" fill="#e8f4fc" stroke="#6a9ac8" stroke-width="0.8"/><rect x="4" y="4" width="27" height="2.5" fill="#f8a040"/><text x="27" y="15" font-family="Liberation Mono" font-size="8" fill="#3a5a8a" text-anchor="end">0</text><rect x="4.0" y="20" width="4" height="4" fill="#f4f8fc"/><rect x="9.5" y="20" width="4" height="4" fill="#f4f8fc"/><rect x="15.0" y="20" width="4" height="4" fill="#f4f8fc"/><rect x="20.5" y="20" width="4" height="4" fill="#5a9ac8"/><rect x="26.0" y="20" width="4" height="4" fill="#5a9ac8"/><rect x="4.0" y="26" width="4" height="4" fill="#f4f8fc"/><rect x="9.5" y="26" width="4" height="4" fill="#f4f8fc"/><rect x="15.0" y="26" width="4" height="4" fill="#f4f8fc"/><rect x="20.5" y="26" width="4" height="4" fill="#5a9ac8"/><rect x="26.0" y="26" width="4" height="4" fill="#5a9ac8"/><rect x="4.0" y="32" width="4" height="4" fill="#f4f8fc"/><rect x="9.5" y="32" width="4" height="4" fill="#f4f8fc"/><rect x="15.0" y="32" width="4" height="4" fill="#f4f8fc"/><rect x="20.5" y="32" width="4" height="4" fill="#5a9ac8"/><rect x="26.0" y="32" width="4" height="4" fill="#5a9ac8"/><rect x="4.0" y="38" width="4" height="4" fill="#f4f8fc"/><rect x="9.5" y="38" width="4" height="4" fill="#f4f8fc"/><rect x="15.0" y="38" width="4" height="4" fill="#f4f8fc"/><rect x="20.5" y="38" width="4" height="4" fill="#5a9ac8"/><rect x="26.0" y="38" width="4" height="4" fill="#5a9ac8"/><rect x="26" y="32" width="3.5" height="10" fill="#f08a20"/></svg>
<svg class="a" style="left:334px;top:2108px;" width="48" height="48" viewBox="0 0 48 48"><path d="M1 15 L9 11 L9 37 L1 33Z" fill="#6c3bb8"/><path d="M35 1 L41 4 L9 37 L5 33Z" fill="#8c54dc"/><path d="M5 15 L9 11 L41 44 L35 47Z" fill="#7440c4"/><path d="M35 1 L47 7 L47 41 L35 47Z" fill="#b484f2"/><path d="M35 13 L28 19 L28 29 L35 35Z" fill="#6a3ab8"/></svg>
<svg class="a" style="left:412px;top:2108px;" width="48" height="48" viewBox="0 0 48 48"><circle cx="24" cy="24" r="21" fill="#db4437"/><path d="M24 24 L45 24 A21 21 0 0 1 13.5 42.2Z" fill="#f4c20d"/><path d="M24 24 L13.5 42.2 A21 21 0 0 1 5.8 13.5Z" fill="#0f9d58"/><circle cx="24" cy="24" r="10" fill="#fff"/><circle cx="24" cy="24" r="8" fill="#4285f4"/></svg>
<svg class="a" style="left:488px;top:2112px;" width="52" height="42" viewBox="0 0 52 42"><g transform="rotate(-8 18 20)"><rect x="4" y="2" width="26" height="38" rx="3" fill="#4a8ad0" stroke="#2a5a98" stroke-width="1"/><rect x="6" y="4" width="2.5" height="2" fill="#cfe4f8"/><rect x="26" y="4" width="2.5" height="2" fill="#cfe4f8"/><rect x="6" y="8" width="2.5" height="2" fill="#cfe4f8"/><rect x="26" y="8" width="2.5" height="2" fill="#cfe4f8"/><rect x="6" y="12" width="2.5" height="2" fill="#cfe4f8"/><rect x="26" y="12" width="2.5" height="2" fill="#cfe4f8"/><rect x="6" y="16" width="2.5" height="2" fill="#cfe4f8"/><rect x="26" y="16" width="2.5" height="2" fill="#cfe4f8"/><rect x="6" y="20" width="2.5" height="2" fill="#cfe4f8"/><rect x="26" y="20" width="2.5" height="2" fill="#cfe4f8"/><rect x="6" y="24" width="2.5" height="2" fill="#cfe4f8"/><rect x="26" y="24" width="2.5" height="2" fill="#cfe4f8"/><rect x="6" y="28" width="2.5" height="2" fill="#cfe4f8"/><rect x="26" y="28" width="2.5" height="2" fill="#cfe4f8"/><rect x="6" y="32" width="2.5" height="2" fill="#cfe4f8"/><rect x="26" y="32" width="2.5" height="2" fill="#cfe4f8"/><rect x="6" y="36" width="2.5" height="2" fill="#cfe4f8"/><rect x="26" y="36" width="2.5" height="2" fill="#cfe4f8"/><rect x="10" y="4" width="14" height="10" fill="#f07020"/><rect x="10" y="16" width="14" height="10" fill="#f07020"/><rect x="10" y="28" width="14" height="10" fill="#f07020"/><circle cx="17" cy="9" r="2.5" fill="#f8d040"/><circle cx="17" cy="21" r="2.5" fill="#f8d040"/><circle cx="17" cy="33" r="2.5" fill="#f8d040"/></g><path d="M34 6 Q24 20 30 36 Q36 24 48 20" stroke="#f0c050" stroke-width="3" fill="none"/></svg>
<svg class="a" style="left:566px;top:2110px;" width="52" height="48" viewBox="0 0 52 48"><path d="M24 8 L10 2 Q6 2 8 6 L16 12 L4 12 Q1 13 3 16 L14 20 L4 30 Q2 34 6 34 L18 28 Q22 38 32 38 Q44 36 44 24 Q44 10 30 8Z" fill="#f08020"/><circle cx="31" cy="23" r="9" fill="#fff"/><circle cx="31" cy="22" r="5.5" fill="#1a4a9a"/><path d="M30 30 Q38 28 46 30 L46 40 Q45 46 38 48 Q31 46 30 40Z" fill="#f8d030" stroke="#2050a0" stroke-width="1.5"/><path d="M38 29 L38 47 Q31 45 30 40 L30 36 L46 36 L46 31Z" fill="#2a68c8"/></svg>
<svg class="a" style="left:648px;top:2108px;" width="44" height="48" viewBox="0 0 44 48"><path d="M18 2 L26 2 L36 38 L8 38Z" fill="#f07818"/><path d="M14.5 13 L29.5 13 L32 22 L12 22Z" fill="#e8e8e8"/><path d="M10.5 28 L33.5 28 L35 34 L9 34Z" fill="#e8e8e8"/><path d="M2 38 L42 38 L40 46 L4 46Z" fill="#f08a20"/><path d="M6 38 L38 38 L36 42 L8 42Z" fill="#d86010"/></svg>
<svg class="a" style="left:722px;top:2114px;" width="50" height="38" viewBox="0 0 50 38"><path d="M14 12 Q18 4 28 6 Q34 0 42 2 Q40 10 40 18 Q40 30 28 32 Q18 34 12 26Z" fill="#6a6258"/><circle cx="20" cy="14" r="5" fill="#f0f0f0" stroke="#333"/><circle cx="30" cy="13" r="5" fill="#f0f0f0" stroke="#333"/><circle cx="21" cy="14" r="2.2" fill="#111"/><circle cx="31" cy="13" r="2.2" fill="#111"/><ellipse cx="7" cy="21" rx="6" ry="5" fill="#141414"/><path d="M26 24 L46 36" stroke="#d08030" stroke-width="3"/><path d="M42 33 L48 37" stroke="#333" stroke-width="4"/></svg>
<svg class="a" style="left:802px;top:2112px;" width="50" height="40" viewBox="0 0 50 40"><ellipse cx="24" cy="10" rx="21" ry="8" fill="#fff" stroke="#e8e0d8" stroke-width="1"/><ellipse cx="24" cy="11" rx="16" ry="5" fill="#d8904a"/><path d="M6 14 Q24 24 42 14 L38 20 Q24 28 10 20Z" fill="#fff"/><path d="M10 20 Q24 28 38 20 L34 26 Q24 32 14 26Z" fill="#d8904a"/><path d="M14 26 Q24 32 34 26 L30 31 Q24 35 18 31Z" fill="#fff"/><path d="M18 31 Q24 35 30 31 L26 38 Q22 40 20 36Z" fill="#d8904a"/></svg>
<svg class="a" style="left:880px;top:2108px;" width="50" height="48" viewBox="0 0 50 48"><path d="M2 12 L18 2 L25 9 L46 9 L45 44 L33 47 L6 44 Z" fill="#2e2e2e"/><path d="M2 12 L18 2 L25 9 L28 30 L8 36Z" fill="#3a3a3a"/><text x="8" y="36" font-family="Liberation Sans" font-weight="bold" font-size="26" fill="#8a90a0" letter-spacing="-2">VR</text><text x="8" y="45" font-family="Liberation Sans" font-weight="bold" font-size="10" fill="#1c1c1c" stroke="#9aa0b4" stroke-width="1.5" paint-order="stroke" transform="rotate(7 25 42)">Editor</text></svg>
<svg class="a" style="left:961px;top:2108px;" width="42" height="48" viewBox="0 0 42 48"><path d="M2 4 Q21 -1 40 4 L40 24 Q38 40 21 47 Q4 40 2 24Z" fill="#080808" stroke="#fff" stroke-width="2.5"/><path d="M19.5 8 L22.5 8 L22.5 14 L27 14 L27 17 L22.5 17 L22.5 36 L19.5 36 L19.5 17 L15 17 L15 14 L19.5 14Z" fill="#fff"/><circle cx="21" cy="9" r="3" fill="none" stroke="#fff" stroke-width="1.2"/><path d="M5 14 Q8 24 16 30 M37 14 Q34 24 26 30" stroke="#fff" stroke-width="2.5" fill="none"/><path d="M7 20 L12 22 M35 20 L30 22 M8 26 L13 27 M34 26 L29 27" stroke="#fff" stroke-width="1.5"/><text x="21" y="43" font-family="Liberation Sans" font-size="7" font-weight="bold" fill="#fff" text-anchor="middle">141</text></svg>
<svg class="a" style="left:1035px;top:2107px;" width="50" height="50" viewBox="0 0 50 50"><rect x="1" y="1" width="48" height="48" rx="3" fill="#f2f2f2"/><path d="M1 1 L49 49 L49 1Z" fill="#e4e4e4" opacity="0.6"/><circle cx="25" cy="10" r="4" fill="#111"/><path d="M20 13 Q26 12 30 14 Q34 18 34 28 L32 30 L31 24 L30 46 L26 46 L25 34 L23 46 L19 46 L19 28 L18 22 Q14 18 13 12 L12 4 L15 4 L17 12Z" fill="#111"/></svg>
<svg class="a" style="left:1112px;top:2107px;" width="50" height="50" viewBox="0 0 50 50"><rect x="1" y="1" width="48" height="48" fill="#f0f0f0"/><text x="2" y="12" font-family="Liberation Sans" font-size="12.5" fill="#333" letter-spacing="-0.3"><tspan fill="#8a2020">z</tspan>snes</text><circle cx="28" cy="30" r="14" fill="#111"/><circle cx="27" cy="24" r="7" fill="#2050c8"/><ellipse cx="16" cy="32" rx="7" ry="5" fill="#20a020"/><circle cx="38" cy="26" r="5" fill="#d02020"/><ellipse cx="26" cy="40" rx="5" ry="3.5" fill="#e0c020"/><path d="M32 30 Q39 28 46 30 L46 40 Q45 46 39 48 Q33 46 32 40Z" fill="#f8d030" stroke="#2050a0" stroke-width="1.2"/><path d="M39 29 L39 47 Q33 45 32 40 L32 36 L46 36 L46 31Z" fill="#2a68c8"/></svg>
<svg class="a" style="left:1191px;top:2110px;" width="50" height="46" viewBox="0 0 50 46"><path d="M4 10 Q10 2 24 6 Q38 2 44 10 Q50 26 44 36 Q38 38 34 28 L14 28 Q10 38 4 36 Q-2 26 4 10Z" fill="#eceef8" stroke="#b0b0c8" stroke-width="1"/><circle cx="11" cy="14" r="6" fill="#fff" stroke="#c0c0d0"/><path d="M9.5 9 L12.5 9 L12.5 12.5 L16 12.5 L16 15.5 L12.5 15.5 L12.5 19 L9.5 19 L9.5 15.5 L6 15.5 L6 12.5 L9.5 12.5Z" fill="#5a5a98"/><circle cx="37" cy="9" r="2" fill="#30b050"/><circle cx="33" cy="13" r="2" fill="#e080c0"/><circle cx="41" cy="13" r="2" fill="#e03030"/><circle cx="37" cy="17" r="2" fill="#6a7ad0"/><path d="M30 26 Q37 24 44 26 L44 36 Q43 42 37 44 Q31 42 30 36Z" fill="#f8d030" stroke="#2050a0" stroke-width="1.2"/><path d="M37 25 L37 43 Q31 41 30 36 L30 32 L44 32 L44 27Z" fill="#2a68c8"/></svg>
<svg class="a" style="left:1271px;top:2107px;" width="46" height="50" viewBox="0 0 46 50"><path d="M2 16 L10 10 L10 44 L2 40Z" fill="#2a80e0"/><path d="M4 14 L10 10 L10 12 L5 15Z" fill="#f0e020"/><path d="M10 10 L24 22 L24 12 L30 8 L30 36 L24 40 L10 26Z" fill="#30b830"/><path d="M10 26 L24 40 L24 44 L10 30Z" fill="#1a7a1a"/><path d="M24 12 L28 2 L32 4 L30 8Z" fill="#e02020"/><path d="M28 2 L32 4 L32 28 L30 30 L30 8Z" fill="#b01010"/><text x="31" y="20" font-family="Liberation Sans" font-size="11" font-weight="bold" fill="#e03030" stroke="#fff" stroke-width="0.6" paint-order="stroke">64</text></svg>
<svg class="a" style="left:1349.5px;top:2109px" width="46" height="46" viewBox="0 0 46 46"><defs><linearGradient id="se" x1="0" y1="0" x2="0" y2="1"><stop offset="0" stop-color="#80d8f8"/><stop offset="1" stop-color="#1a78b8"/></linearGradient></defs><rect x="1" y="1" width="44" height="44" rx="9" fill="url(#se)" stroke="#fff" stroke-width="1.5"/><path d="M2 14 L11 26 L4 44 M11 26 L20 34 L30 28 L29 18 L20 14 L11 26 M20 14 L26 2 M29 18 L40 12 L44 2 M30 28 L44 24 M20 34 L24 44 M40 12 L44 16" stroke="#fff" stroke-width="5.5" fill="none" stroke-linejoin="round"/><circle cx="11" cy="26" r="5" fill="#fff"/><circle cx="29" cy="18" r="4" fill="#fff"/><circle cx="40" cy="12" r="3.5" fill="#fff"/></svg>
<svg class="a" style="left:1427.5px;top:2109px" width="46" height="46" viewBox="0 0 46 46"><defs><linearGradient id="se" x1="0" y1="0" x2="0" y2="1"><stop offset="0" stop-color="#80d8f8"/><stop offset="1" stop-color="#1a78b8"/></linearGradient></defs><rect x="1" y="1" width="44" height="44" rx="9" fill="url(#se)" stroke="#fff" stroke-width="1.5"/><path d="M2 14 L11 26 L4 44 M11 26 L20 34 L30 28 L29 18 L20 14 L11 26 M20 14 L26 2 M29 18 L40 12 L44 2 M30 28 L44 24 M20 34 L24 44 M40 12 L44 16" stroke="#fff" stroke-width="5.5" fill="none" stroke-linejoin="round"/><circle cx="11" cy="26" r="5" fill="#fff"/><circle cx="29" cy="18" r="4" fill="#fff"/><circle cx="40" cy="12" r="3.5" fill="#fff"/></svg>
<svg class="a" style="left:1504px;top:2108px;" width="48" height="48" viewBox="0 0 48 48"><rect x="5" y="5" width="38" height="38" fill="#c89020"/><circle cx="24" cy="24" r="22" fill="#d8a828"/><circle cx="24" cy="24" r="19" fill="#2a3a5a"/><path d="M14 30 Q20 14 34 18" stroke="#4a5a80" stroke-width="3" fill="none"/><path d="M11 12 L18 12 L21 26 L24 14 L27 26 L30 12 L37 12 L31 36 L25 36 L24 30 L23 36 L17 36Z" fill="#f0c030" stroke="#8a5010" stroke-width="1"/></svg>
<svg class="a" style="left:1581px;top:2107px;" width="50" height="50" viewBox="0 0 50 50"><rect x="1" y="1" width="48" height="48" fill="#000"/><path d="M26 1 L49 1 L49 49 L26 49 L17 25Z" fill="#fff"/><path d="M30 6 Q36 4 38 8 Q34 10 36 14 Q42 12 40 20 Q36 18 32 22 Q38 24 36 30 L30 26 Q34 32 30 38 L26 34 Q28 42 32 46 L40 42 Q46 34 44 26 L48 20 L44 12 Q46 6 40 4Z" fill="#000"/></svg>
<svg class="a" style="left:1657px;top:2109px;" width="48" height="48" viewBox="0 0 48 48"><defs><linearGradient id="st" x1="0" y1="0" x2="0" y2="1"><stop offset="0" stop-color="#141a40"/><stop offset="1" stop-color="#1a80c0"/></linearGradient></defs><circle cx="24" cy="23" r="22" fill="url(#st)"/><circle cx="31" cy="15" r="7" fill="none" stroke="#fff" stroke-width="3.5"/><path d="M2 25 L18 32" stroke="#fff" stroke-width="6" stroke-linecap="round"/><circle cx="18" cy="32" r="6" fill="#fff"/><circle cx="18" cy="32" r="3" fill="#2a5a98"/><path d="M22 28 L27 20" stroke="#fff" stroke-width="5"/></svg>
<svg class="a" style="left:3611px;top:2128px;" width="15" height="10" viewBox="0 0 15 10"><path d="M1 9 L7.5 2 L14 9Z" fill="#eef0f8" stroke="#667" stroke-width="0.8"/></svg>
<svg class="a" style="left:3651px;top:2121px;" width="24" height="25" viewBox="0 0 24 25"><path d="M1 8 L6 8 L13 1 L13 24 L6 17 L1 17Z" fill="#f0f0f0" stroke="#555" stroke-width="1"/><path d="M17 8 Q20 12.5 17 17" stroke="#f0f0f0" stroke-width="1.5" fill="none"/></svg>
<svg class="a" style="left:3685px;top:2121px;" width="25" height="26" viewBox="0 0 25 26"><rect x="8" y="3" width="16" height="14" fill="#f0f0f0"/><rect x="10" y="5" width="12" height="10" fill="#4a3a30"/><rect x="10" y="19" width="14" height="3" fill="#f0f0f0"/><rect x="1" y="0" width="6" height="9" fill="#f0f0f0" stroke="#666" stroke-width="0.8"/><line x1="4" y1="9" x2="4" y2="25" stroke="#f0f0f0" stroke-width="1.5"/></svg>
<div class="t" style="left:3771px;top:2112.5px;font-size:17.7px;color:#fafafa;font-weight:normal;transform:translateX(-50%);">1:57 AM</div>
<div class="t" style="left:3771.5px;top:2138.2px;font-size:18.7px;color:#fafafa;font-weight:normal;transform:translateX(-50%);">4/5/2020</div>
<div class="a" style="left:3826px;top:2106px;width:14px;height:54px;border:1px solid rgba(255,255,255,0.35);border-radius:2px;background:linear-gradient(rgba(255,255,255,0.2),rgba(0,0,0,0.1))"></div>
<div class="a" style="left:443.5px;top:1836.5px;width:2px;height:2px;border-radius:1px;background:#6ab2ec"></div>
<div class="a" style="left:446.5px;top:1836.5px;width:2px;height:2px;border-radius:1px;background:#6ab2ec"></div>
<div class="a" style="left:449.5px;top:1836.5px;width:2px;height:2px;border-radius:1px;background:#6ab2ec"></div>
<div class="a" style="left:452.5px;top:1836.5px;width:2px;height:2px;border-radius:1px;background:#6ab2ec"></div>
<div class="a" style="left:455.5px;top:1836.5px;width:2px;height:2px;border-radius:1px;background:#6ab2ec"></div>
<div class="a" style="left:458.5px;top:1836.5px;width:2px;height:2px;border-radius:1px;background:#6ab2ec"></div>
<div class="a" style="left:461.5px;top:1836.5px;width:2px;height:2px;border-radius:1px;background:#6ab2ec"></div>
<div class="a" style="left:464.5px;top:1836.5px;width:2px;height:2px;border-radius:1px;background:#6ab2ec"></div>
<div class="a" style="left:467.5px;top:1836.5px;width:2px;height:2px;border-radius:1px;background:#6ab2ec"></div>
<div class="a" style="left:470.5px;top:1836.5px;width:2px;height:2px;border-radius:1px;background:#6ab2ec"></div>
<div class="a" style="left:473.5px;top:1836.5px;width:2px;height:2px;border-radius:1px;background:#6ab2ec"></div>
<div class="a" style="left:1777.5px;top:1598px;width:2px;height:2px;border-radius:1px;background:#6ab2ec"></div>
<div class="a" style="left:1780.5px;top:1598px;width:2px;height:2px;border-radius:1px;background:#6ab2ec"></div>
<div class="a" style="left:1783.5px;top:1598px;width:2px;height:2px;border-radius:1px;background:#6ab2ec"></div>
<div class="a" style="left:1786.5px;top:1598px;width:2px;height:2px;border-radius:1px;background:#6ab2ec"></div>
<div class="a" style="left:1789.5px;top:1598px;width:2px;height:2px;border-radius:1px;background:#6ab2ec"></div>
<div class="a" style="left:1792.5px;top:1598px;width:2px;height:2px;border-radius:1px;background:#6ab2ec"></div>
<div class="a" style="left:1795.5px;top:1598px;width:2px;height:2px;border-radius:1px;background:#6ab2ec"></div>
<div class="a" style="left:1798.5px;top:1598px;width:2px;height:2px;border-radius:1px;background:#6ab2ec"></div>
<div class="a" style="left:1801.5px;top:1598px;width:2px;height:2px;border-radius:1px;background:#6ab2ec"></div>
<div class="a" style="left:1804.5px;top:1598px;width:2px;height:2px;border-radius:1px;background:#6ab2ec"></div>
<div class="a" style="left:1807.5px;top:1598px;width:2px;height:2px;border-radius:1px;background:#6ab2ec"></div>
<div class="a" style="left:906.5px;top:1188.5px;width:2px;height:2px;border-radius:1px;background:#6ab2ec"></div>
<div class="a" style="left:906.5px;top:1191.5px;width:2px;height:2px;border-radius:1px;background:#6ab2ec"></div>
<div class="a" style="left:906.5px;top:1194.5px;width:2px;height:2px;border-radius:1px;background:#6ab2ec"></div>
<div class="a" style="left:906.5px;top:1197.5px;width:2px;height:2px;border-radius:1px;background:#6ab2ec"></div>
<div class="a" style="left:906.5px;top:1200.5px;width:2px;height:2px;border-radius:1px;background:#6ab2ec"></div>
<div class="a" style="left:906.5px;top:1203.5px;width:2px;height:2px;border-radius:1px;background:#6ab2ec"></div>
<div class="a" style="left:906.5px;top:1206.5px;width:2px;height:2px;border-radius:1px;background:#6ab2ec"></div>
<div class="a" style="left:906.5px;top:1209.5px;width:2px;height:2px;border-radius:1px;background:#6ab2ec"></div>
<div class="a" style="left:906.5px;top:1212.5px;width:2px;height:2px;border-radius:1px;background:#6ab2ec"></div>
<div class="a" style="left:906.5px;top:1215.5px;width:2px;height:2px;border-radius:1px;background:#6ab2ec"></div>
<div class="a" style="left:906.5px;top:1218.5px;width:2px;height:2px;border-radius:1px;background:#6ab2ec"></div>
<div class="a" style="left:2678px;top:1188.5px;width:2px;height:2px;border-radius:1px;background:#6ab2ec"></div>
<div class="a" style="left:2678px;top:1191.5px;width:2px;height:2px;border-radius:1px;background:#6ab2ec"></div>
<div class="a" style="left:2678px;top:1194.5px;width:2px;height:2px;border-radius:1px;background:#6ab2ec"></div>
<div class="a" style="left:2678px;top:1197.5px;width:2px;height:2px;border-radius:1px;background:#6ab2ec"></div>
<div class="a" style="left:2678px;top:1200.5px;width:2px;height:2px;border-radius:1px;background:#6ab2ec"></div>
<div class="a" style="left:2678px;top:1203.5px;width:2px;height:2px;border-radius:1px;background:#6ab2ec"></div>
<div class="a" style="left:2678px;top:1206.5px;width:2px;height:2px;border-radius:1px;background:#6ab2ec"></div>
<div class="a" style="left:2678px;top:1209.5px;width:2px;height:2px;border-radius:1px;background:#6ab2ec"></div>
<div class="a" style="left:2678px;top:1212.5px;width:2px;height:2px;border-radius:1px;background:#6ab2ec"></div>
<div class="a" style="left:2678px;top:1215.5px;width:2px;height:2px;border-radius:1px;background:#6ab2ec"></div>
<div class="a" style="left:2678px;top:1218.5px;width:2px;height:2px;border-radius:1px;background:#6ab2ec"></div>
</body></html>
